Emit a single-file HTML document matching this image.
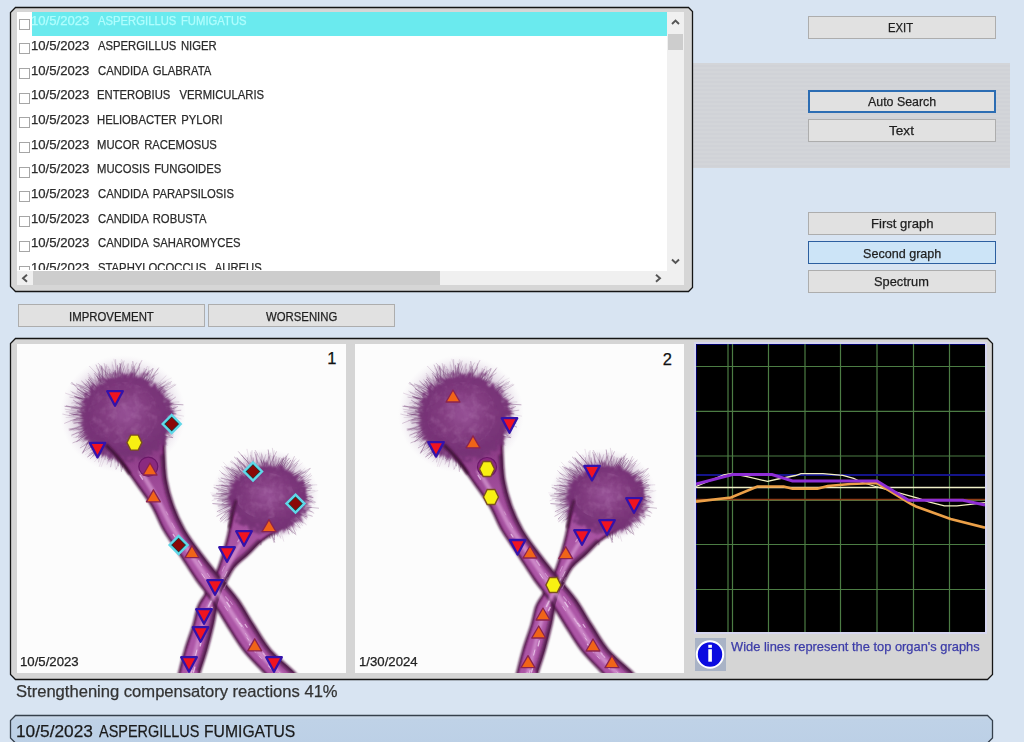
<!DOCTYPE html><html><head><meta charset="utf-8"><style>
*{margin:0;padding:0;box-sizing:border-box}
html,body{width:1024px;height:742px;overflow:hidden;background:#d8e4f2;font-family:"Liberation Sans",sans-serif;color:#222}
.a{position:absolute}
.t{position:absolute;white-space:pre;-webkit-text-stroke:0.25px currentColor}
.btn{position:absolute;left:808px;width:187.5px;height:23px;background:#e1e1e1;border:1px solid #adadad}
.cb{position:absolute;left:19px;width:11px;height:11px;border:1px solid #a6a6a6;background:#fff}
</style></head><body>
<svg width="0" height="0" style="position:absolute"><defs><radialGradient id="hg" cx="0.5" cy="0.45" r="0.55"><stop offset="0" stop-color="#985498"/><stop offset="0.45" stop-color="#823c80"/><stop offset="0.8" stop-color="#763276"/><stop offset="1" stop-color="#763276" stop-opacity="0.85"/></radialGradient><radialGradient id="fz" cx="0.5" cy="0.5" r="0.5"><stop offset="0.5" stop-color="#7e3a7c" stop-opacity="0.75"/><stop offset="0.75" stop-color="#906498" stop-opacity="0.3"/><stop offset="1" stop-color="#d8c8e0" stop-opacity="0"/></radialGradient><filter id="mott" x="0" y="0" width="100%" height="100%"><feTurbulence type="fractalNoise" baseFrequency="0.12" numOctaves="3" seed="7" result="n"/><feColorMatrix in="n" type="matrix" values="0 0 0 0 0.85  0 0 0 0 0.6  0 0 0 0 0.85  0 0 0 1.4 -0.62" result="m"/><feComposite in="m" in2="SourceGraphic" operator="in"/></filter><filter id="fray" x="-30%" y="-30%" width="160%" height="160%"><feTurbulence type="turbulence" baseFrequency="0.18" numOctaves="2" seed="5" result="t"/><feDisplacementMap in="SourceGraphic" in2="t" scale="14" xChannelSelector="R" yChannelSelector="G" result="d"/><feGaussianBlur in="d" stdDeviation="0.9"/></filter><filter id="bl1" x="-20%" y="-20%" width="140%" height="140%"><feGaussianBlur stdDeviation="1.1"/></filter><filter id="bl05" x="-5%" y="-5%" width="110%" height="110%"><feGaussianBlur stdDeviation="0.55"/></filter><symbol id="fung" viewBox="0 0 329 329"><ellipse cx="106" cy="70" rx="63" ry="59" fill="url(#fz)"/><ellipse cx="248" cy="151.5" rx="54" ry="47" fill="url(#fz)"/><g stroke="#6e3a70" stroke-linecap="round" filter="url(#bl05)"><line x1="68.3" y1="80.9" x2="52.2" y2="86.4" stroke-opacity="0.33" stroke-width="0.8"/><line x1="121.5" y1="103.2" x2="123.4" y2="116.3" stroke-opacity="0.18" stroke-width="0.6"/><line x1="141.9" y1="91.4" x2="155.7" y2="93.6" stroke-opacity="0.49" stroke-width="1.0"/><line x1="83.2" y1="39.1" x2="77.1" y2="35.6" stroke-opacity="0.33" stroke-width="0.4"/><line x1="119.0" y1="100.8" x2="121.1" y2="105.7" stroke-opacity="0.30" stroke-width="0.9"/><line x1="65.8" y1="65.5" x2="54.7" y2="62.4" stroke-opacity="0.31" stroke-width="0.6"/><line x1="150.9" y1="69.4" x2="166.6" y2="72.1" stroke-opacity="0.26" stroke-width="0.5"/><line x1="97.9" y1="100.1" x2="95.6" y2="114.9" stroke-opacity="0.45" stroke-width="0.6"/><line x1="147.6" y1="59.5" x2="151.9" y2="57.0" stroke-opacity="0.47" stroke-width="0.7"/><line x1="143.1" y1="65.7" x2="149.1" y2="65.7" stroke-opacity="0.42" stroke-width="0.6"/><line x1="137.2" y1="87.8" x2="149.7" y2="100.1" stroke-opacity="0.19" stroke-width="0.5"/><line x1="132.7" y1="88.4" x2="147.2" y2="93.5" stroke-opacity="0.35" stroke-width="0.7"/><line x1="121.2" y1="106.2" x2="122.8" y2="112.7" stroke-opacity="0.19" stroke-width="0.7"/><line x1="114.3" y1="102.5" x2="113.6" y2="120.1" stroke-opacity="0.26" stroke-width="0.9"/><line x1="115.1" y1="103.8" x2="117.0" y2="119.8" stroke-opacity="0.19" stroke-width="1.0"/><line x1="114.2" y1="102.4" x2="119.8" y2="116.3" stroke-opacity="0.25" stroke-width="0.4"/><line x1="139.5" y1="89.9" x2="146.0" y2="94.9" stroke-opacity="0.28" stroke-width="0.7"/><line x1="143.2" y1="60.9" x2="155.7" y2="61.8" stroke-opacity="0.21" stroke-width="0.5"/><line x1="141.8" y1="48.3" x2="147.2" y2="42.1" stroke-opacity="0.41" stroke-width="1.0"/><line x1="120.6" y1="109.1" x2="124.6" y2="125.1" stroke-opacity="0.30" stroke-width="0.5"/><line x1="149.2" y1="80.0" x2="156.6" y2="83.4" stroke-opacity="0.24" stroke-width="0.9"/><line x1="76.3" y1="50.8" x2="71.3" y2="45.6" stroke-opacity="0.17" stroke-width="0.5"/><line x1="65.8" y1="55.3" x2="53.0" y2="53.1" stroke-opacity="0.47" stroke-width="0.5"/><line x1="141.6" y1="73.5" x2="151.9" y2="70.4" stroke-opacity="0.21" stroke-width="0.6"/><line x1="75.4" y1="56.1" x2="68.7" y2="49.1" stroke-opacity="0.49" stroke-width="0.8"/><line x1="91.6" y1="35.4" x2="86.8" y2="30.6" stroke-opacity="0.16" stroke-width="0.9"/><line x1="92.5" y1="30.4" x2="91.5" y2="25.2" stroke-opacity="0.32" stroke-width="0.8"/><line x1="87.1" y1="108.1" x2="84.4" y2="113.4" stroke-opacity="0.41" stroke-width="0.9"/><line x1="102.7" y1="31.6" x2="107.1" y2="16.9" stroke-opacity="0.27" stroke-width="0.8"/><line x1="141.2" y1="46.4" x2="151.0" y2="42.7" stroke-opacity="0.45" stroke-width="0.7"/><line x1="79.7" y1="45.4" x2="71.7" y2="35.7" stroke-opacity="0.18" stroke-width="0.8"/><line x1="149.4" y1="68.3" x2="163.8" y2="66.2" stroke-opacity="0.41" stroke-width="0.7"/><line x1="66.0" y1="84.6" x2="60.0" y2="85.5" stroke-opacity="0.16" stroke-width="0.8"/><line x1="71.0" y1="73.9" x2="57.0" y2="75.6" stroke-opacity="0.37" stroke-width="1.0"/><line x1="104.8" y1="100.4" x2="103.1" y2="109.1" stroke-opacity="0.22" stroke-width="0.5"/><line x1="139.8" y1="48.8" x2="150.2" y2="46.2" stroke-opacity="0.26" stroke-width="0.8"/><line x1="118.0" y1="103.5" x2="117.3" y2="118.9" stroke-opacity="0.46" stroke-width="0.6"/><line x1="74.5" y1="53.1" x2="68.6" y2="49.7" stroke-opacity="0.44" stroke-width="0.9"/><line x1="95.3" y1="29.8" x2="90.9" y2="22.4" stroke-opacity="0.31" stroke-width="0.6"/><line x1="114.4" y1="104.2" x2="117.4" y2="117.0" stroke-opacity="0.26" stroke-width="0.9"/><line x1="143.9" y1="66.0" x2="149.0" y2="63.0" stroke-opacity="0.46" stroke-width="0.4"/><line x1="95.8" y1="34.3" x2="95.8" y2="25.3" stroke-opacity="0.16" stroke-width="0.5"/><line x1="74.6" y1="78.5" x2="60.9" y2="86.4" stroke-opacity="0.20" stroke-width="0.4"/><line x1="79.8" y1="44.3" x2="72.2" y2="33.5" stroke-opacity="0.43" stroke-width="1.0"/><line x1="92.0" y1="40.1" x2="84.8" y2="31.6" stroke-opacity="0.15" stroke-width="0.7"/><line x1="98.3" y1="38.5" x2="95.2" y2="30.5" stroke-opacity="0.39" stroke-width="0.7"/><line x1="74.5" y1="44.2" x2="68.8" y2="35.8" stroke-opacity="0.47" stroke-width="0.5"/><line x1="143.8" y1="54.1" x2="149.8" y2="51.1" stroke-opacity="0.37" stroke-width="0.9"/><line x1="77.7" y1="95.8" x2="63.3" y2="103.8" stroke-opacity="0.48" stroke-width="0.7"/><line x1="85.7" y1="43.4" x2="81.0" y2="29.8" stroke-opacity="0.37" stroke-width="0.8"/><line x1="116.0" y1="109.7" x2="112.5" y2="127.1" stroke-opacity="0.34" stroke-width="0.9"/><line x1="87.2" y1="107.0" x2="82.4" y2="122.4" stroke-opacity="0.18" stroke-width="0.7"/><line x1="66.0" y1="57.8" x2="54.7" y2="59.0" stroke-opacity="0.43" stroke-width="0.4"/><line x1="116.7" y1="39.3" x2="121.7" y2="31.4" stroke-opacity="0.20" stroke-width="0.5"/><line x1="64.7" y1="66.0" x2="49.4" y2="61.7" stroke-opacity="0.48" stroke-width="0.7"/><line x1="137.8" y1="60.2" x2="145.3" y2="57.9" stroke-opacity="0.25" stroke-width="0.8"/><line x1="80.9" y1="42.1" x2="71.3" y2="29.4" stroke-opacity="0.26" stroke-width="0.6"/><line x1="130.6" y1="36.3" x2="136.8" y2="31.6" stroke-opacity="0.49" stroke-width="0.7"/><line x1="74.7" y1="55.6" x2="64.0" y2="50.2" stroke-opacity="0.36" stroke-width="0.4"/><line x1="144.2" y1="63.1" x2="154.4" y2="63.9" stroke-opacity="0.35" stroke-width="0.7"/><line x1="94.0" y1="41.1" x2="88.8" y2="30.3" stroke-opacity="0.48" stroke-width="1.0"/><line x1="101.4" y1="105.5" x2="101.0" y2="112.2" stroke-opacity="0.44" stroke-width="0.9"/><line x1="70.0" y1="75.0" x2="62.5" y2="75.3" stroke-opacity="0.47" stroke-width="0.5"/><line x1="112.0" y1="40.0" x2="111.5" y2="32.5" stroke-opacity="0.39" stroke-width="0.6"/><line x1="81.3" y1="99.6" x2="76.4" y2="103.7" stroke-opacity="0.19" stroke-width="0.7"/><line x1="105.9" y1="102.6" x2="106.5" y2="114.4" stroke-opacity="0.28" stroke-width="0.6"/><line x1="72.2" y1="64.1" x2="64.9" y2="61.8" stroke-opacity="0.37" stroke-width="0.7"/><line x1="129.8" y1="39.9" x2="136.0" y2="25.0" stroke-opacity="0.41" stroke-width="0.9"/><line x1="135.8" y1="50.5" x2="144.6" y2="48.4" stroke-opacity="0.23" stroke-width="1.0"/><line x1="131.9" y1="49.3" x2="139.0" y2="45.4" stroke-opacity="0.24" stroke-width="0.5"/><line x1="124.6" y1="39.4" x2="127.3" y2="24.4" stroke-opacity="0.29" stroke-width="0.8"/><line x1="140.7" y1="73.6" x2="153.0" y2="80.1" stroke-opacity="0.49" stroke-width="0.5"/><line x1="64.1" y1="68.6" x2="52.8" y2="66.3" stroke-opacity="0.22" stroke-width="0.4"/><line x1="131.8" y1="89.0" x2="141.3" y2="96.6" stroke-opacity="0.35" stroke-width="0.5"/><line x1="120.0" y1="99.9" x2="119.5" y2="115.8" stroke-opacity="0.47" stroke-width="0.5"/><line x1="147.1" y1="85.7" x2="156.0" y2="92.2" stroke-opacity="0.26" stroke-width="0.7"/><line x1="68.4" y1="66.6" x2="56.3" y2="70.9" stroke-opacity="0.40" stroke-width="0.9"/><line x1="122.0" y1="102.3" x2="129.2" y2="115.0" stroke-opacity="0.22" stroke-width="0.5"/><line x1="73.5" y1="67.6" x2="57.9" y2="61.9" stroke-opacity="0.40" stroke-width="0.9"/><line x1="80.2" y1="44.6" x2="71.5" y2="35.3" stroke-opacity="0.49" stroke-width="0.9"/><line x1="103.7" y1="110.9" x2="99.4" y2="124.9" stroke-opacity="0.44" stroke-width="0.6"/><line x1="140.6" y1="45.4" x2="153.5" y2="39.8" stroke-opacity="0.42" stroke-width="0.6"/><line x1="100.3" y1="39.4" x2="98.4" y2="30.1" stroke-opacity="0.15" stroke-width="0.6"/><line x1="80.1" y1="41.2" x2="77.7" y2="33.6" stroke-opacity="0.38" stroke-width="0.6"/><line x1="84.7" y1="38.8" x2="77.4" y2="29.5" stroke-opacity="0.50" stroke-width="0.8"/><line x1="93.3" y1="32.6" x2="81.4" y2="19.5" stroke-opacity="0.37" stroke-width="0.8"/><line x1="104.4" y1="104.9" x2="105.7" y2="110.4" stroke-opacity="0.28" stroke-width="0.5"/><line x1="105.8" y1="110.9" x2="105.6" y2="123.0" stroke-opacity="0.49" stroke-width="0.7"/><line x1="146.4" y1="68.8" x2="160.6" y2="62.6" stroke-opacity="0.36" stroke-width="0.9"/><line x1="148.4" y1="81.5" x2="155.2" y2="83.3" stroke-opacity="0.21" stroke-width="0.7"/><line x1="80.6" y1="50.1" x2="66.6" y2="40.0" stroke-opacity="0.33" stroke-width="0.8"/><line x1="82.1" y1="95.1" x2="72.6" y2="104.7" stroke-opacity="0.25" stroke-width="0.8"/><line x1="96.7" y1="99.1" x2="97.7" y2="107.3" stroke-opacity="0.20" stroke-width="0.9"/><line x1="72.3" y1="96.0" x2="65.6" y2="109.1" stroke-opacity="0.50" stroke-width="1.0"/><line x1="145.2" y1="88.2" x2="154.8" y2="92.7" stroke-opacity="0.49" stroke-width="0.5"/><line x1="62.3" y1="64.0" x2="48.0" y2="62.3" stroke-opacity="0.49" stroke-width="0.9"/><line x1="79.1" y1="50.9" x2="68.3" y2="43.3" stroke-opacity="0.22" stroke-width="0.4"/><line x1="72.6" y1="64.4" x2="62.4" y2="61.0" stroke-opacity="0.31" stroke-width="0.6"/><line x1="73.2" y1="52.6" x2="60.3" y2="44.8" stroke-opacity="0.50" stroke-width="1.0"/><line x1="102.5" y1="37.1" x2="104.1" y2="30.8" stroke-opacity="0.42" stroke-width="0.8"/><line x1="83.3" y1="95.9" x2="73.9" y2="106.1" stroke-opacity="0.36" stroke-width="0.8"/><line x1="106.7" y1="37.5" x2="110.3" y2="30.1" stroke-opacity="0.47" stroke-width="0.9"/><line x1="138.1" y1="77.6" x2="146.5" y2="79.1" stroke-opacity="0.37" stroke-width="0.5"/><line x1="73.8" y1="62.0" x2="68.2" y2="59.5" stroke-opacity="0.34" stroke-width="0.8"/><line x1="79.1" y1="95.7" x2="74.6" y2="101.9" stroke-opacity="0.41" stroke-width="0.9"/><line x1="136.3" y1="84.3" x2="149.3" y2="92.7" stroke-opacity="0.42" stroke-width="0.5"/><line x1="74.3" y1="85.2" x2="61.4" y2="93.9" stroke-opacity="0.38" stroke-width="1.0"/><line x1="88.1" y1="102.7" x2="77.0" y2="112.3" stroke-opacity="0.30" stroke-width="0.6"/><line x1="141.6" y1="93.2" x2="147.5" y2="94.6" stroke-opacity="0.35" stroke-width="0.7"/><line x1="91.7" y1="39.0" x2="81.0" y2="28.4" stroke-opacity="0.22" stroke-width="0.8"/><line x1="137.6" y1="86.6" x2="148.7" y2="95.8" stroke-opacity="0.25" stroke-width="0.5"/><line x1="80.0" y1="100.2" x2="76.8" y2="109.4" stroke-opacity="0.40" stroke-width="0.7"/><line x1="144.6" y1="49.8" x2="158.8" y2="40.7" stroke-opacity="0.43" stroke-width="0.6"/><line x1="90.6" y1="101.8" x2="78.5" y2="114.0" stroke-opacity="0.24" stroke-width="0.6"/><line x1="81.4" y1="95.8" x2="75.5" y2="104.0" stroke-opacity="0.22" stroke-width="0.7"/><line x1="117.4" y1="35.0" x2="122.9" y2="20.1" stroke-opacity="0.21" stroke-width="0.9"/><line x1="132.3" y1="47.2" x2="136.3" y2="43.6" stroke-opacity="0.34" stroke-width="0.7"/><line x1="145.7" y1="62.1" x2="158.4" y2="53.3" stroke-opacity="0.34" stroke-width="0.9"/><line x1="134.9" y1="85.7" x2="144.1" y2="97.0" stroke-opacity="0.18" stroke-width="0.8"/><line x1="131.8" y1="100.7" x2="142.3" y2="109.1" stroke-opacity="0.23" stroke-width="0.9"/><line x1="64.3" y1="64.7" x2="54.2" y2="64.8" stroke-opacity="0.49" stroke-width="0.8"/><line x1="66.9" y1="71.5" x2="52.6" y2="69.3" stroke-opacity="0.47" stroke-width="0.6"/><line x1="124.8" y1="36.2" x2="135.8" y2="24.5" stroke-opacity="0.44" stroke-width="0.9"/><line x1="145.1" y1="60.1" x2="156.8" y2="59.2" stroke-opacity="0.43" stroke-width="0.7"/><line x1="75.9" y1="85.3" x2="61.3" y2="86.2" stroke-opacity="0.28" stroke-width="0.5"/><line x1="116.7" y1="103.8" x2="115.5" y2="112.5" stroke-opacity="0.17" stroke-width="0.6"/><line x1="136.5" y1="95.0" x2="150.2" y2="101.3" stroke-opacity="0.17" stroke-width="0.7"/><line x1="68.1" y1="49.4" x2="62.7" y2="48.4" stroke-opacity="0.21" stroke-width="0.5"/><line x1="109.8" y1="108.5" x2="114.0" y2="120.5" stroke-opacity="0.21" stroke-width="0.6"/><line x1="125.6" y1="104.6" x2="129.5" y2="112.8" stroke-opacity="0.44" stroke-width="0.7"/><line x1="103.1" y1="110.6" x2="104.4" y2="127.4" stroke-opacity="0.34" stroke-width="1.0"/><line x1="71.0" y1="73.6" x2="65.6" y2="71.9" stroke-opacity="0.43" stroke-width="0.6"/><line x1="67.7" y1="63.7" x2="60.7" y2="58.8" stroke-opacity="0.38" stroke-width="0.5"/><line x1="144.3" y1="72.4" x2="153.5" y2="75.7" stroke-opacity="0.40" stroke-width="0.8"/><line x1="124.9" y1="96.8" x2="131.5" y2="103.2" stroke-opacity="0.45" stroke-width="0.7"/><line x1="76.7" y1="38.2" x2="71.4" y2="31.6" stroke-opacity="0.20" stroke-width="0.9"/><line x1="148.7" y1="70.3" x2="164.0" y2="75.0" stroke-opacity="0.18" stroke-width="0.6"/><line x1="99.0" y1="39.3" x2="96.3" y2="28.4" stroke-opacity="0.48" stroke-width="0.8"/><line x1="128.6" y1="43.6" x2="137.2" y2="31.0" stroke-opacity="0.47" stroke-width="0.5"/><line x1="122.2" y1="41.0" x2="128.0" y2="30.4" stroke-opacity="0.21" stroke-width="0.9"/><line x1="92.3" y1="101.4" x2="91.1" y2="107.3" stroke-opacity="0.31" stroke-width="0.8"/><line x1="79.9" y1="99.6" x2="76.3" y2="104.9" stroke-opacity="0.31" stroke-width="1.0"/><line x1="125.5" y1="36.7" x2="127.5" y2="32.0" stroke-opacity="0.40" stroke-width="0.5"/><line x1="70.9" y1="56.0" x2="67.5" y2="52.2" stroke-opacity="0.43" stroke-width="0.5"/><line x1="79.1" y1="47.6" x2="72.0" y2="40.7" stroke-opacity="0.25" stroke-width="0.6"/><line x1="74.2" y1="93.9" x2="69.3" y2="100.6" stroke-opacity="0.41" stroke-width="0.6"/><line x1="143.2" y1="57.5" x2="155.8" y2="50.7" stroke-opacity="0.44" stroke-width="0.5"/><line x1="127.3" y1="94.3" x2="133.9" y2="106.4" stroke-opacity="0.21" stroke-width="0.6"/><line x1="126.7" y1="38.2" x2="128.5" y2="32.3" stroke-opacity="0.20" stroke-width="0.5"/><line x1="78.2" y1="87.2" x2="64.7" y2="97.5" stroke-opacity="0.33" stroke-width="0.8"/><line x1="110.5" y1="30.3" x2="110.1" y2="20.3" stroke-opacity="0.29" stroke-width="0.4"/><line x1="72.5" y1="92.5" x2="55.9" y2="98.8" stroke-opacity="0.38" stroke-width="0.8"/><line x1="142.3" y1="74.0" x2="151.5" y2="76.3" stroke-opacity="0.19" stroke-width="0.6"/><line x1="63.7" y1="67.7" x2="48.2" y2="65.2" stroke-opacity="0.21" stroke-width="0.9"/><line x1="138.2" y1="49.0" x2="146.1" y2="43.5" stroke-opacity="0.20" stroke-width="0.8"/><line x1="144.8" y1="67.0" x2="158.7" y2="70.1" stroke-opacity="0.22" stroke-width="1.0"/><line x1="81.7" y1="46.7" x2="76.5" y2="43.4" stroke-opacity="0.35" stroke-width="0.8"/><line x1="84.9" y1="106.2" x2="80.6" y2="114.8" stroke-opacity="0.19" stroke-width="1.0"/><line x1="134.8" y1="100.8" x2="142.3" y2="110.3" stroke-opacity="0.35" stroke-width="0.6"/><line x1="143.8" y1="47.4" x2="157.7" y2="40.2" stroke-opacity="0.19" stroke-width="0.9"/><line x1="95.5" y1="109.6" x2="93.0" y2="117.3" stroke-opacity="0.44" stroke-width="0.5"/><line x1="74.1" y1="60.8" x2="68.7" y2="60.7" stroke-opacity="0.50" stroke-width="1.0"/><line x1="86.3" y1="41.6" x2="81.4" y2="28.8" stroke-opacity="0.28" stroke-width="0.8"/><line x1="116.8" y1="41.3" x2="119.1" y2="34.1" stroke-opacity="0.20" stroke-width="0.6"/><line x1="74.7" y1="56.3" x2="63.2" y2="53.7" stroke-opacity="0.35" stroke-width="0.6"/><line x1="85.3" y1="46.1" x2="73.8" y2="38.7" stroke-opacity="0.49" stroke-width="0.8"/><line x1="69.1" y1="76.6" x2="56.0" y2="76.8" stroke-opacity="0.42" stroke-width="0.9"/><line x1="61.2" y1="73.7" x2="45.8" y2="70.1" stroke-opacity="0.29" stroke-width="0.7"/><line x1="65.9" y1="53.5" x2="55.2" y2="48.5" stroke-opacity="0.30" stroke-width="0.9"/><line x1="91.8" y1="97.9" x2="81.4" y2="107.9" stroke-opacity="0.41" stroke-width="0.8"/><line x1="106.4" y1="36.2" x2="101.8" y2="24.3" stroke-opacity="0.19" stroke-width="0.7"/><line x1="68.6" y1="69.4" x2="63.0" y2="68.3" stroke-opacity="0.33" stroke-width="0.5"/><line x1="93.1" y1="102.7" x2="93.3" y2="110.8" stroke-opacity="0.47" stroke-width="1.0"/><line x1="84.1" y1="35.1" x2="81.5" y2="25.0" stroke-opacity="0.23" stroke-width="0.8"/><line x1="66.0" y1="53.3" x2="61.1" y2="49.4" stroke-opacity="0.19" stroke-width="0.7"/><line x1="136.9" y1="60.8" x2="144.1" y2="57.0" stroke-opacity="0.26" stroke-width="0.4"/><line x1="139.7" y1="45.6" x2="146.9" y2="38.4" stroke-opacity="0.35" stroke-width="0.4"/><line x1="148.9" y1="77.9" x2="157.7" y2="79.7" stroke-opacity="0.48" stroke-width="1.0"/><line x1="71.5" y1="75.6" x2="62.9" y2="73.8" stroke-opacity="0.46" stroke-width="0.5"/><line x1="125.3" y1="40.7" x2="128.2" y2="29.9" stroke-opacity="0.46" stroke-width="1.0"/><line x1="118.0" y1="106.0" x2="117.7" y2="113.5" stroke-opacity="0.17" stroke-width="0.5"/><line x1="100.5" y1="36.5" x2="103.5" y2="20.0" stroke-opacity="0.40" stroke-width="0.5"/><line x1="91.3" y1="31.1" x2="84.2" y2="23.0" stroke-opacity="0.23" stroke-width="0.6"/><line x1="97.4" y1="38.4" x2="94.0" y2="31.9" stroke-opacity="0.38" stroke-width="0.9"/><line x1="77.6" y1="97.3" x2="65.2" y2="108.2" stroke-opacity="0.23" stroke-width="0.6"/><line x1="142.6" y1="53.1" x2="150.7" y2="50.3" stroke-opacity="0.18" stroke-width="1.0"/><line x1="69.7" y1="83.3" x2="61.2" y2="91.7" stroke-opacity="0.36" stroke-width="0.6"/><line x1="105.8" y1="109.7" x2="106.9" y2="115.7" stroke-opacity="0.41" stroke-width="0.5"/><line x1="98.9" y1="106.1" x2="95.0" y2="112.4" stroke-opacity="0.50" stroke-width="0.4"/><line x1="65.4" y1="79.3" x2="55.5" y2="77.9" stroke-opacity="0.32" stroke-width="0.5"/><line x1="68.0" y1="57.0" x2="59.4" y2="52.4" stroke-opacity="0.42" stroke-width="0.7"/><line x1="63.0" y1="68.6" x2="49.1" y2="67.8" stroke-opacity="0.48" stroke-width="0.5"/><line x1="112.4" y1="38.4" x2="111.7" y2="25.5" stroke-opacity="0.30" stroke-width="0.9"/><line x1="115.6" y1="31.5" x2="117.4" y2="23.6" stroke-opacity="0.23" stroke-width="0.7"/><line x1="73.2" y1="70.2" x2="60.6" y2="67.8" stroke-opacity="0.35" stroke-width="0.9"/><line x1="120.6" y1="99.0" x2="122.8" y2="103.7" stroke-opacity="0.30" stroke-width="0.7"/><line x1="102.6" y1="109.5" x2="100.0" y2="114.9" stroke-opacity="0.35" stroke-width="0.7"/><line x1="115.1" y1="38.1" x2="115.8" y2="31.2" stroke-opacity="0.16" stroke-width="0.6"/><line x1="77.8" y1="44.9" x2="72.1" y2="38.6" stroke-opacity="0.18" stroke-width="0.9"/><line x1="122.8" y1="99.3" x2="125.1" y2="106.0" stroke-opacity="0.44" stroke-width="0.9"/><line x1="140.8" y1="83.1" x2="150.5" y2="84.4" stroke-opacity="0.49" stroke-width="0.4"/><line x1="64.1" y1="72.6" x2="47.6" y2="79.3" stroke-opacity="0.31" stroke-width="0.8"/><line x1="140.4" y1="78.1" x2="156.9" y2="76.8" stroke-opacity="0.29" stroke-width="0.6"/><line x1="76.3" y1="84.2" x2="70.9" y2="84.4" stroke-opacity="0.42" stroke-width="0.8"/><line x1="110.5" y1="103.0" x2="114.8" y2="114.4" stroke-opacity="0.31" stroke-width="1.0"/><line x1="81.9" y1="95.8" x2="69.0" y2="108.0" stroke-opacity="0.16" stroke-width="0.6"/><line x1="86.5" y1="45.0" x2="82.3" y2="36.5" stroke-opacity="0.45" stroke-width="0.8"/><line x1="134.9" y1="46.6" x2="144.2" y2="42.7" stroke-opacity="0.28" stroke-width="0.9"/><line x1="113.9" y1="103.5" x2="115.2" y2="110.8" stroke-opacity="0.21" stroke-width="0.5"/><line x1="114.5" y1="104.9" x2="116.9" y2="113.5" stroke-opacity="0.50" stroke-width="0.8"/><line x1="128.8" y1="45.2" x2="131.9" y2="35.7" stroke-opacity="0.39" stroke-width="0.6"/><line x1="101.0" y1="100.1" x2="101.4" y2="107.5" stroke-opacity="0.29" stroke-width="1.0"/><line x1="98.2" y1="37.4" x2="93.3" y2="29.0" stroke-opacity="0.48" stroke-width="0.6"/><line x1="110.1" y1="31.4" x2="104.6" y2="15.6" stroke-opacity="0.26" stroke-width="0.6"/><line x1="143.7" y1="90.3" x2="150.4" y2="96.7" stroke-opacity="0.33" stroke-width="0.4"/><line x1="78.2" y1="90.4" x2="75.1" y2="95.0" stroke-opacity="0.36" stroke-width="0.4"/><line x1="91.6" y1="102.6" x2="90.8" y2="114.6" stroke-opacity="0.40" stroke-width="0.6"/><line x1="99.7" y1="32.4" x2="96.9" y2="26.1" stroke-opacity="0.25" stroke-width="0.8"/><line x1="75.1" y1="89.5" x2="64.3" y2="101.6" stroke-opacity="0.25" stroke-width="0.6"/><line x1="113.0" y1="100.0" x2="113.5" y2="105.3" stroke-opacity="0.35" stroke-width="0.9"/><line x1="141.7" y1="64.8" x2="155.1" y2="67.9" stroke-opacity="0.23" stroke-width="0.8"/><line x1="83.8" y1="34.1" x2="72.5" y2="22.3" stroke-opacity="0.37" stroke-width="0.5"/><line x1="72.4" y1="85.3" x2="67.5" y2="88.4" stroke-opacity="0.26" stroke-width="0.7"/><line x1="99.6" y1="101.5" x2="97.9" y2="111.6" stroke-opacity="0.21" stroke-width="0.8"/><line x1="108.1" y1="101.3" x2="109.4" y2="110.6" stroke-opacity="0.20" stroke-width="0.7"/><line x1="94.2" y1="35.0" x2="84.7" y2="24.5" stroke-opacity="0.29" stroke-width="0.6"/><line x1="140.6" y1="83.5" x2="145.9" y2="85.7" stroke-opacity="0.36" stroke-width="0.7"/><line x1="89.7" y1="99.5" x2="88.0" y2="104.6" stroke-opacity="0.46" stroke-width="0.7"/><line x1="103.0" y1="108.0" x2="102.6" y2="115.4" stroke-opacity="0.37" stroke-width="1.0"/><line x1="80.2" y1="98.1" x2="66.2" y2="108.1" stroke-opacity="0.37" stroke-width="0.8"/><line x1="74.1" y1="88.6" x2="65.8" y2="90.9" stroke-opacity="0.46" stroke-width="0.6"/><line x1="133.7" y1="53.5" x2="139.4" y2="49.9" stroke-opacity="0.26" stroke-width="0.6"/><line x1="139.9" y1="65.4" x2="146.9" y2="62.5" stroke-opacity="0.39" stroke-width="0.5"/><line x1="145.3" y1="70.2" x2="155.1" y2="67.9" stroke-opacity="0.32" stroke-width="0.8"/><line x1="67.6" y1="58.8" x2="57.4" y2="51.9" stroke-opacity="0.49" stroke-width="0.6"/><line x1="81.1" y1="103.4" x2="74.6" y2="109.7" stroke-opacity="0.39" stroke-width="0.8"/><line x1="147.7" y1="61.0" x2="154.7" y2="60.2" stroke-opacity="0.32" stroke-width="0.7"/><line x1="81.4" y1="94.6" x2="71.1" y2="105.0" stroke-opacity="0.23" stroke-width="0.5"/><line x1="90.3" y1="98.8" x2="88.7" y2="110.4" stroke-opacity="0.17" stroke-width="0.4"/><line x1="139.1" y1="93.1" x2="144.4" y2="96.7" stroke-opacity="0.42" stroke-width="0.7"/><line x1="128.6" y1="104.5" x2="141.9" y2="113.9" stroke-opacity="0.24" stroke-width="0.7"/><line x1="116.7" y1="36.6" x2="117.7" y2="22.3" stroke-opacity="0.40" stroke-width="0.6"/><line x1="84.9" y1="103.9" x2="73.2" y2="114.7" stroke-opacity="0.35" stroke-width="0.7"/><line x1="95.2" y1="33.8" x2="95.2" y2="18.0" stroke-opacity="0.19" stroke-width="0.6"/><line x1="88.9" y1="41.2" x2="82.9" y2="36.8" stroke-opacity="0.35" stroke-width="1.0"/><line x1="139.5" y1="64.1" x2="153.0" y2="60.6" stroke-opacity="0.37" stroke-width="0.6"/><line x1="147.0" y1="53.0" x2="152.5" y2="51.7" stroke-opacity="0.19" stroke-width="0.4"/><line x1="96.7" y1="107.8" x2="98.7" y2="125.6" stroke-opacity="0.27" stroke-width="0.4"/><line x1="68.9" y1="60.5" x2="59.1" y2="59.6" stroke-opacity="0.43" stroke-width="0.9"/><line x1="98.1" y1="104.1" x2="92.5" y2="115.8" stroke-opacity="0.49" stroke-width="0.6"/><line x1="92.5" y1="35.6" x2="82.9" y2="23.5" stroke-opacity="0.21" stroke-width="0.5"/><line x1="138.5" y1="56.5" x2="146.7" y2="48.7" stroke-opacity="0.26" stroke-width="0.4"/><line x1="74.7" y1="57.2" x2="61.8" y2="54.4" stroke-opacity="0.23" stroke-width="0.7"/><line x1="82.3" y1="94.9" x2="80.4" y2="100.2" stroke-opacity="0.46" stroke-width="0.6"/><line x1="136.6" y1="85.3" x2="143.2" y2="94.4" stroke-opacity="0.22" stroke-width="0.9"/><line x1="68.6" y1="73.5" x2="53.4" y2="76.4" stroke-opacity="0.17" stroke-width="0.7"/><line x1="83.8" y1="38.7" x2="82.1" y2="30.2" stroke-opacity="0.45" stroke-width="1.0"/><line x1="65.8" y1="84.0" x2="54.3" y2="92.7" stroke-opacity="0.16" stroke-width="0.5"/><line x1="130.5" y1="91.1" x2="135.9" y2="99.1" stroke-opacity="0.26" stroke-width="0.7"/><line x1="141.0" y1="72.2" x2="157.2" y2="65.8" stroke-opacity="0.33" stroke-width="0.9"/><line x1="116.9" y1="32.5" x2="122.2" y2="23.7" stroke-opacity="0.44" stroke-width="0.9"/><line x1="139.5" y1="67.2" x2="156.6" y2="64.2" stroke-opacity="0.40" stroke-width="0.6"/><line x1="133.6" y1="53.6" x2="142.2" y2="44.5" stroke-opacity="0.29" stroke-width="0.6"/><line x1="82.5" y1="36.8" x2="78.2" y2="28.1" stroke-opacity="0.27" stroke-width="0.6"/><line x1="136.2" y1="50.9" x2="140.7" y2="46.7" stroke-opacity="0.41" stroke-width="0.5"/><line x1="104.3" y1="33.4" x2="99.8" y2="20.3" stroke-opacity="0.19" stroke-width="0.5"/><line x1="83.7" y1="98.5" x2="80.7" y2="102.6" stroke-opacity="0.29" stroke-width="0.6"/><line x1="62.8" y1="60.4" x2="56.4" y2="56.2" stroke-opacity="0.26" stroke-width="0.9"/><line x1="140.8" y1="96.3" x2="145.7" y2="105.8" stroke-opacity="0.23" stroke-width="0.6"/><line x1="96.6" y1="38.9" x2="95.6" y2="30.4" stroke-opacity="0.48" stroke-width="0.6"/><line x1="121.0" y1="101.5" x2="133.0" y2="114.7" stroke-opacity="0.37" stroke-width="0.6"/><line x1="84.3" y1="44.3" x2="80.2" y2="31.9" stroke-opacity="0.45" stroke-width="0.8"/><line x1="66.5" y1="68.9" x2="60.3" y2="66.7" stroke-opacity="0.39" stroke-width="0.7"/><line x1="86.9" y1="39.7" x2="79.9" y2="32.5" stroke-opacity="0.36" stroke-width="0.7"/><line x1="73.3" y1="67.1" x2="60.2" y2="66.4" stroke-opacity="0.36" stroke-width="0.8"/><line x1="137.2" y1="56.7" x2="148.3" y2="56.8" stroke-opacity="0.41" stroke-width="0.6"/><line x1="102.3" y1="28.3" x2="104.8" y2="18.4" stroke-opacity="0.19" stroke-width="1.0"/><line x1="70.7" y1="71.8" x2="54.8" y2="70.6" stroke-opacity="0.48" stroke-width="0.9"/><line x1="117.5" y1="35.4" x2="115.8" y2="17.5" stroke-opacity="0.45" stroke-width="0.8"/><line x1="105.8" y1="109.7" x2="105.4" y2="120.6" stroke-opacity="0.45" stroke-width="0.5"/><line x1="98.5" y1="107.2" x2="97.1" y2="112.9" stroke-opacity="0.43" stroke-width="0.7"/><line x1="108.2" y1="109.6" x2="105.1" y2="125.4" stroke-opacity="0.34" stroke-width="0.9"/><line x1="115.9" y1="39.3" x2="115.3" y2="29.6" stroke-opacity="0.16" stroke-width="0.6"/><line x1="134.3" y1="39.9" x2="137.1" y2="34.0" stroke-opacity="0.29" stroke-width="0.9"/><line x1="73.5" y1="42.6" x2="71.3" y2="37.1" stroke-opacity="0.22" stroke-width="0.8"/><line x1="135.7" y1="42.8" x2="141.8" y2="38.4" stroke-opacity="0.30" stroke-width="0.4"/><line x1="86.6" y1="98.7" x2="81.9" y2="111.0" stroke-opacity="0.36" stroke-width="0.8"/><line x1="120.4" y1="98.8" x2="126.6" y2="111.3" stroke-opacity="0.20" stroke-width="0.5"/><line x1="143.4" y1="56.5" x2="151.1" y2="50.7" stroke-opacity="0.50" stroke-width="0.8"/><line x1="102.8" y1="35.7" x2="101.3" y2="26.7" stroke-opacity="0.20" stroke-width="0.8"/><line x1="68.0" y1="88.2" x2="59.0" y2="93.2" stroke-opacity="0.33" stroke-width="1.0"/><line x1="82.5" y1="101.7" x2="77.5" y2="107.9" stroke-opacity="0.25" stroke-width="0.9"/><line x1="96.2" y1="109.2" x2="93.6" y2="122.8" stroke-opacity="0.48" stroke-width="0.6"/><line x1="104.3" y1="32.7" x2="99.8" y2="22.9" stroke-opacity="0.30" stroke-width="0.6"/><line x1="64.6" y1="85.0" x2="56.0" y2="86.8" stroke-opacity="0.39" stroke-width="0.5"/><line x1="77.1" y1="86.8" x2="65.2" y2="98.5" stroke-opacity="0.30" stroke-width="0.6"/><line x1="124.5" y1="33.6" x2="130.4" y2="22.4" stroke-opacity="0.18" stroke-width="0.9"/><line x1="137.4" y1="88.2" x2="144.6" y2="95.0" stroke-opacity="0.38" stroke-width="0.6"/><line x1="141.5" y1="45.2" x2="146.1" y2="42.6" stroke-opacity="0.31" stroke-width="0.6"/><line x1="70.5" y1="77.4" x2="56.9" y2="79.2" stroke-opacity="0.49" stroke-width="1.0"/><line x1="143.3" y1="68.4" x2="159.0" y2="69.8" stroke-opacity="0.40" stroke-width="1.0"/><line x1="140.9" y1="84.5" x2="149.6" y2="89.9" stroke-opacity="0.23" stroke-width="1.0"/><line x1="115.3" y1="103.5" x2="117.7" y2="109.9" stroke-opacity="0.41" stroke-width="0.5"/><line x1="126.2" y1="102.8" x2="130.2" y2="115.3" stroke-opacity="0.24" stroke-width="0.9"/><line x1="100.9" y1="30.9" x2="100.0" y2="24.4" stroke-opacity="0.16" stroke-width="0.9"/><line x1="147.1" y1="56.1" x2="151.8" y2="53.6" stroke-opacity="0.34" stroke-width="0.7"/><line x1="138.4" y1="95.4" x2="145.2" y2="101.2" stroke-opacity="0.19" stroke-width="0.7"/><line x1="129.0" y1="92.8" x2="138.4" y2="99.6" stroke-opacity="0.42" stroke-width="0.5"/><line x1="77.6" y1="85.9" x2="71.1" y2="90.2" stroke-opacity="0.35" stroke-width="0.7"/><line x1="125.9" y1="44.6" x2="131.0" y2="29.4" stroke-opacity="0.49" stroke-width="0.7"/><line x1="72.6" y1="90.8" x2="56.6" y2="93.5" stroke-opacity="0.29" stroke-width="0.4"/><line x1="130.3" y1="102.8" x2="136.1" y2="116.1" stroke-opacity="0.20" stroke-width="0.7"/><line x1="139.2" y1="75.6" x2="146.6" y2="80.6" stroke-opacity="0.38" stroke-width="0.9"/><line x1="142.1" y1="80.0" x2="148.1" y2="80.5" stroke-opacity="0.19" stroke-width="1.0"/><line x1="87.7" y1="101.7" x2="77.6" y2="110.7" stroke-opacity="0.48" stroke-width="0.7"/><line x1="62.2" y1="69.8" x2="52.2" y2="71.5" stroke-opacity="0.41" stroke-width="0.6"/><line x1="80.5" y1="96.0" x2="74.0" y2="105.2" stroke-opacity="0.30" stroke-width="0.7"/><line x1="146.9" y1="82.3" x2="152.3" y2="84.2" stroke-opacity="0.34" stroke-width="0.6"/><line x1="111.8" y1="100.9" x2="115.0" y2="110.2" stroke-opacity="0.32" stroke-width="0.5"/><line x1="105.9" y1="34.0" x2="105.4" y2="28.9" stroke-opacity="0.49" stroke-width="0.4"/><line x1="68.9" y1="47.0" x2="61.3" y2="40.9" stroke-opacity="0.28" stroke-width="0.6"/><line x1="75.2" y1="46.5" x2="68.1" y2="40.7" stroke-opacity="0.33" stroke-width="0.9"/><line x1="137.7" y1="80.3" x2="145.9" y2="81.3" stroke-opacity="0.43" stroke-width="0.7"/><line x1="129.9" y1="43.1" x2="136.5" y2="37.3" stroke-opacity="0.18" stroke-width="1.0"/><line x1="123.9" y1="40.3" x2="130.5" y2="33.9" stroke-opacity="0.43" stroke-width="0.8"/><line x1="145.4" y1="83.7" x2="150.4" y2="86.2" stroke-opacity="0.34" stroke-width="1.0"/><line x1="85.0" y1="46.7" x2="77.2" y2="31.4" stroke-opacity="0.35" stroke-width="0.4"/><line x1="102.9" y1="35.0" x2="107.7" y2="22.0" stroke-opacity="0.47" stroke-width="0.4"/><line x1="113.4" y1="35.3" x2="114.7" y2="20.6" stroke-opacity="0.31" stroke-width="0.7"/><line x1="132.9" y1="93.0" x2="146.5" y2="98.0" stroke-opacity="0.19" stroke-width="0.9"/><line x1="86.3" y1="38.3" x2="81.3" y2="34.1" stroke-opacity="0.26" stroke-width="1.0"/><line x1="65.1" y1="54.8" x2="57.7" y2="52.5" stroke-opacity="0.34" stroke-width="0.9"/><line x1="137.0" y1="98.4" x2="147.5" y2="102.2" stroke-opacity="0.30" stroke-width="0.6"/><line x1="85.8" y1="33.4" x2="82.4" y2="22.5" stroke-opacity="0.29" stroke-width="0.9"/><line x1="139.0" y1="93.9" x2="144.3" y2="98.8" stroke-opacity="0.22" stroke-width="0.6"/><line x1="125.0" y1="99.4" x2="131.3" y2="110.4" stroke-opacity="0.29" stroke-width="0.7"/><line x1="126.2" y1="41.2" x2="132.9" y2="30.5" stroke-opacity="0.49" stroke-width="0.6"/><line x1="94.5" y1="38.8" x2="93.5" y2="30.5" stroke-opacity="0.35" stroke-width="0.6"/><line x1="145.4" y1="85.7" x2="153.5" y2="91.3" stroke-opacity="0.30" stroke-width="0.8"/><line x1="64.4" y1="54.8" x2="48.5" y2="49.2" stroke-opacity="0.32" stroke-width="0.5"/><line x1="106.7" y1="38.6" x2="109.6" y2="30.1" stroke-opacity="0.16" stroke-width="0.8"/><line x1="70.2" y1="54.8" x2="60.9" y2="53.7" stroke-opacity="0.48" stroke-width="0.9"/><line x1="117.5" y1="40.5" x2="119.0" y2="25.4" stroke-opacity="0.22" stroke-width="0.7"/><line x1="79.8" y1="49.8" x2="69.1" y2="39.5" stroke-opacity="0.46" stroke-width="1.0"/><line x1="92.2" y1="38.0" x2="89.0" y2="20.9" stroke-opacity="0.25" stroke-width="0.9"/><line x1="100.8" y1="37.0" x2="96.3" y2="30.1" stroke-opacity="0.34" stroke-width="0.6"/><line x1="96.5" y1="102.0" x2="94.8" y2="108.5" stroke-opacity="0.25" stroke-width="0.6"/><line x1="99.3" y1="105.7" x2="101.5" y2="121.9" stroke-opacity="0.45" stroke-width="0.9"/><line x1="75.7" y1="46.8" x2="64.7" y2="37.2" stroke-opacity="0.38" stroke-width="1.0"/><line x1="111.6" y1="37.1" x2="114.6" y2="32.3" stroke-opacity="0.28" stroke-width="0.9"/><line x1="110.0" y1="105.4" x2="109.0" y2="115.1" stroke-opacity="0.48" stroke-width="0.7"/><line x1="72.3" y1="56.2" x2="66.9" y2="50.3" stroke-opacity="0.19" stroke-width="1.0"/><line x1="87.7" y1="44.1" x2="74.1" y2="34.2" stroke-opacity="0.35" stroke-width="0.5"/><line x1="142.2" y1="67.6" x2="156.8" y2="60.3" stroke-opacity="0.38" stroke-width="0.4"/><line x1="144.9" y1="76.8" x2="161.6" y2="83.0" stroke-opacity="0.45" stroke-width="0.9"/><line x1="72.9" y1="65.9" x2="61.2" y2="67.6" stroke-opacity="0.33" stroke-width="0.6"/><line x1="71.1" y1="70.2" x2="57.0" y2="71.3" stroke-opacity="0.32" stroke-width="0.4"/><line x1="66.7" y1="73.0" x2="49.1" y2="73.5" stroke-opacity="0.20" stroke-width="0.6"/><line x1="84.9" y1="103.1" x2="70.7" y2="112.8" stroke-opacity="0.48" stroke-width="1.0"/><line x1="133.9" y1="38.0" x2="137.2" y2="33.9" stroke-opacity="0.36" stroke-width="0.8"/><line x1="75.5" y1="45.6" x2="59.4" y2="40.0" stroke-opacity="0.33" stroke-width="1.0"/><line x1="139.1" y1="76.3" x2="152.5" y2="85.6" stroke-opacity="0.16" stroke-width="0.4"/><line x1="125.7" y1="36.4" x2="132.1" y2="26.5" stroke-opacity="0.42" stroke-width="0.9"/><line x1="139.3" y1="70.1" x2="153.2" y2="76.6" stroke-opacity="0.44" stroke-width="0.6"/><line x1="87.2" y1="99.5" x2="83.5" y2="103.2" stroke-opacity="0.24" stroke-width="0.8"/><line x1="69.9" y1="64.4" x2="56.2" y2="62.7" stroke-opacity="0.23" stroke-width="0.9"/><line x1="121.4" y1="98.6" x2="125.3" y2="105.9" stroke-opacity="0.42" stroke-width="0.6"/><line x1="109.0" y1="107.8" x2="109.4" y2="116.2" stroke-opacity="0.24" stroke-width="0.9"/><line x1="120.1" y1="100.2" x2="124.9" y2="107.8" stroke-opacity="0.40" stroke-width="0.8"/><line x1="115.8" y1="34.6" x2="118.7" y2="29.3" stroke-opacity="0.24" stroke-width="0.5"/><line x1="67.5" y1="91.5" x2="59.8" y2="97.5" stroke-opacity="0.47" stroke-width="1.0"/><line x1="80.1" y1="90.7" x2="66.4" y2="97.4" stroke-opacity="0.27" stroke-width="0.9"/><line x1="79.8" y1="93.1" x2="68.9" y2="99.6" stroke-opacity="0.32" stroke-width="0.9"/><line x1="144.5" y1="73.1" x2="154.0" y2="70.2" stroke-opacity="0.47" stroke-width="0.5"/><line x1="118.0" y1="109.0" x2="116.1" y2="126.4" stroke-opacity="0.27" stroke-width="1.0"/><line x1="132.0" y1="100.0" x2="146.2" y2="110.0" stroke-opacity="0.20" stroke-width="0.8"/><line x1="136.7" y1="43.9" x2="149.1" y2="31.7" stroke-opacity="0.28" stroke-width="0.5"/><line x1="99.6" y1="110.9" x2="100.5" y2="116.7" stroke-opacity="0.27" stroke-width="0.4"/><line x1="93.8" y1="100.3" x2="91.4" y2="106.5" stroke-opacity="0.34" stroke-width="0.7"/><line x1="109.0" y1="33.7" x2="103.9" y2="17.1" stroke-opacity="0.23" stroke-width="0.4"/><line x1="90.7" y1="106.5" x2="84.4" y2="122.3" stroke-opacity="0.21" stroke-width="0.6"/><line x1="73.2" y1="56.0" x2="63.1" y2="44.4" stroke-opacity="0.31" stroke-width="0.8"/><line x1="127.7" y1="40.6" x2="134.0" y2="36.6" stroke-opacity="0.49" stroke-width="0.4"/><line x1="109.0" y1="35.2" x2="107.7" y2="29.6" stroke-opacity="0.21" stroke-width="0.8"/><line x1="113.8" y1="99.6" x2="113.6" y2="107.4" stroke-opacity="0.32" stroke-width="0.8"/><line x1="72.1" y1="77.0" x2="67.3" y2="79.0" stroke-opacity="0.16" stroke-width="0.6"/><line x1="78.8" y1="46.5" x2="71.5" y2="38.1" stroke-opacity="0.26" stroke-width="0.6"/><line x1="135.6" y1="45.3" x2="143.6" y2="38.6" stroke-opacity="0.31" stroke-width="0.6"/><line x1="136.3" y1="53.0" x2="153.0" y2="49.2" stroke-opacity="0.46" stroke-width="0.5"/><line x1="61.3" y1="67.7" x2="52.8" y2="69.8" stroke-opacity="0.40" stroke-width="0.5"/><line x1="76.3" y1="53.9" x2="59.9" y2="48.3" stroke-opacity="0.18" stroke-width="0.8"/><line x1="83.4" y1="100.2" x2="73.8" y2="106.5" stroke-opacity="0.33" stroke-width="0.6"/><line x1="144.7" y1="70.4" x2="153.1" y2="71.0" stroke-opacity="0.37" stroke-width="0.7"/><line x1="138.7" y1="89.3" x2="147.3" y2="96.5" stroke-opacity="0.49" stroke-width="0.6"/><line x1="74.7" y1="81.0" x2="62.0" y2="89.7" stroke-opacity="0.44" stroke-width="0.9"/><line x1="104.7" y1="110.8" x2="105.2" y2="122.4" stroke-opacity="0.34" stroke-width="1.0"/><line x1="67.6" y1="72.3" x2="59.1" y2="70.2" stroke-opacity="0.33" stroke-width="0.6"/><line x1="117.6" y1="100.9" x2="118.6" y2="116.7" stroke-opacity="0.49" stroke-width="1.0"/><line x1="89.2" y1="33.6" x2="87.3" y2="19.5" stroke-opacity="0.43" stroke-width="0.5"/><line x1="120.3" y1="39.0" x2="126.1" y2="33.2" stroke-opacity="0.16" stroke-width="0.7"/><line x1="82.6" y1="103.0" x2="72.0" y2="110.4" stroke-opacity="0.48" stroke-width="0.8"/><line x1="143.5" y1="85.0" x2="147.8" y2="89.8" stroke-opacity="0.45" stroke-width="0.6"/><line x1="122.1" y1="105.3" x2="121.6" y2="120.2" stroke-opacity="0.37" stroke-width="0.5"/><line x1="101.2" y1="39.4" x2="102.7" y2="23.2" stroke-opacity="0.42" stroke-width="0.9"/><line x1="65.8" y1="52.6" x2="53.7" y2="47.1" stroke-opacity="0.28" stroke-width="0.6"/><line x1="140.1" y1="74.6" x2="155.3" y2="73.1" stroke-opacity="0.38" stroke-width="0.9"/><line x1="92.7" y1="35.9" x2="87.9" y2="28.1" stroke-opacity="0.22" stroke-width="0.8"/><line x1="88.7" y1="31.9" x2="88.6" y2="22.7" stroke-opacity="0.47" stroke-width="0.6"/><line x1="144.4" y1="58.9" x2="161.9" y2="57.9" stroke-opacity="0.27" stroke-width="0.6"/><line x1="67.8" y1="64.9" x2="63.0" y2="62.5" stroke-opacity="0.34" stroke-width="0.7"/><line x1="104.8" y1="36.8" x2="105.1" y2="29.3" stroke-opacity="0.23" stroke-width="0.6"/><line x1="135.9" y1="83.1" x2="144.5" y2="87.4" stroke-opacity="0.48" stroke-width="0.8"/><line x1="73.8" y1="87.9" x2="66.9" y2="92.2" stroke-opacity="0.49" stroke-width="0.5"/><line x1="68.5" y1="85.7" x2="54.7" y2="91.1" stroke-opacity="0.37" stroke-width="1.0"/><line x1="135.1" y1="50.9" x2="147.0" y2="48.9" stroke-opacity="0.33" stroke-width="0.5"/><line x1="109.3" y1="39.2" x2="110.4" y2="32.4" stroke-opacity="0.25" stroke-width="0.8"/><line x1="100.7" y1="36.4" x2="100.5" y2="21.4" stroke-opacity="0.40" stroke-width="0.7"/><line x1="75.2" y1="83.0" x2="64.1" y2="83.1" stroke-opacity="0.46" stroke-width="0.4"/><line x1="138.3" y1="84.4" x2="151.3" y2="89.8" stroke-opacity="0.19" stroke-width="0.7"/><line x1="68.6" y1="52.7" x2="60.1" y2="47.0" stroke-opacity="0.39" stroke-width="0.8"/><line x1="145.6" y1="81.1" x2="152.2" y2="80.4" stroke-opacity="0.32" stroke-width="0.4"/><line x1="139.5" y1="85.4" x2="150.5" y2="86.5" stroke-opacity="0.48" stroke-width="0.9"/><line x1="66.3" y1="73.1" x2="57.8" y2="70.0" stroke-opacity="0.19" stroke-width="0.6"/><line x1="113.9" y1="109.7" x2="116.9" y2="121.0" stroke-opacity="0.29" stroke-width="0.9"/><line x1="104.0" y1="109.5" x2="104.0" y2="123.7" stroke-opacity="0.28" stroke-width="0.7"/><line x1="71.2" y1="79.9" x2="59.0" y2="84.7" stroke-opacity="0.26" stroke-width="0.9"/><line x1="69.1" y1="80.0" x2="53.6" y2="85.2" stroke-opacity="0.28" stroke-width="0.9"/><line x1="147.8" y1="64.2" x2="158.1" y2="64.2" stroke-opacity="0.41" stroke-width="0.6"/><line x1="98.8" y1="29.1" x2="98.6" y2="15.6" stroke-opacity="0.30" stroke-width="0.8"/><line x1="112.3" y1="108.9" x2="109.0" y2="120.4" stroke-opacity="0.27" stroke-width="0.8"/><line x1="143.4" y1="73.7" x2="158.3" y2="72.0" stroke-opacity="0.36" stroke-width="0.5"/><line x1="69.9" y1="95.0" x2="62.6" y2="97.0" stroke-opacity="0.17" stroke-width="0.7"/><line x1="124.6" y1="33.9" x2="129.7" y2="25.2" stroke-opacity="0.40" stroke-width="0.9"/><line x1="105.2" y1="33.0" x2="106.5" y2="24.8" stroke-opacity="0.35" stroke-width="0.7"/><line x1="140.0" y1="67.4" x2="154.7" y2="63.8" stroke-opacity="0.40" stroke-width="1.0"/><line x1="100.0" y1="106.5" x2="98.2" y2="118.2" stroke-opacity="0.21" stroke-width="0.8"/><line x1="138.0" y1="46.4" x2="146.1" y2="43.0" stroke-opacity="0.30" stroke-width="0.5"/><line x1="75.9" y1="48.0" x2="70.6" y2="37.4" stroke-opacity="0.35" stroke-width="1.0"/><line x1="80.8" y1="101.3" x2="78.1" y2="106.6" stroke-opacity="0.39" stroke-width="0.8"/><line x1="123.6" y1="39.4" x2="126.7" y2="31.4" stroke-opacity="0.34" stroke-width="0.4"/><line x1="77.3" y1="96.9" x2="73.3" y2="102.6" stroke-opacity="0.46" stroke-width="1.0"/><line x1="106.1" y1="102.3" x2="108.4" y2="108.4" stroke-opacity="0.43" stroke-width="0.8"/><line x1="102.5" y1="105.8" x2="107.1" y2="119.1" stroke-opacity="0.44" stroke-width="0.9"/><line x1="115.9" y1="107.4" x2="121.3" y2="120.4" stroke-opacity="0.46" stroke-width="0.5"/><line x1="70.1" y1="75.5" x2="59.5" y2="74.3" stroke-opacity="0.35" stroke-width="0.8"/><line x1="141.1" y1="67.3" x2="149.0" y2="67.5" stroke-opacity="0.20" stroke-width="1.0"/><line x1="85.4" y1="99.8" x2="77.3" y2="106.6" stroke-opacity="0.47" stroke-width="0.8"/><line x1="123.5" y1="100.3" x2="133.1" y2="110.7" stroke-opacity="0.46" stroke-width="0.9"/><line x1="111.4" y1="104.1" x2="111.1" y2="112.1" stroke-opacity="0.17" stroke-width="0.8"/><line x1="145.7" y1="85.4" x2="156.5" y2="90.8" stroke-opacity="0.18" stroke-width="0.4"/><line x1="79.0" y1="103.4" x2="68.4" y2="110.5" stroke-opacity="0.17" stroke-width="0.5"/><line x1="146.8" y1="75.0" x2="154.1" y2="74.5" stroke-opacity="0.38" stroke-width="0.8"/><line x1="89.2" y1="102.1" x2="84.9" y2="109.7" stroke-opacity="0.27" stroke-width="0.6"/><line x1="106.3" y1="103.7" x2="109.8" y2="111.3" stroke-opacity="0.26" stroke-width="0.8"/><line x1="102.0" y1="101.4" x2="100.6" y2="117.3" stroke-opacity="0.33" stroke-width="0.6"/><line x1="137.8" y1="44.5" x2="148.8" y2="37.5" stroke-opacity="0.39" stroke-width="0.7"/><line x1="74.1" y1="88.1" x2="64.4" y2="94.3" stroke-opacity="0.34" stroke-width="0.7"/><line x1="116.5" y1="30.5" x2="115.0" y2="22.7" stroke-opacity="0.26" stroke-width="0.4"/><line x1="117.6" y1="34.0" x2="117.7" y2="25.3" stroke-opacity="0.45" stroke-width="0.9"/><line x1="89.4" y1="34.9" x2="82.9" y2="21.7" stroke-opacity="0.29" stroke-width="0.7"/><line x1="138.8" y1="41.4" x2="154.1" y2="34.1" stroke-opacity="0.18" stroke-width="0.5"/><line x1="144.6" y1="63.4" x2="155.6" y2="59.3" stroke-opacity="0.45" stroke-width="0.7"/><line x1="139.3" y1="68.1" x2="155.0" y2="59.5" stroke-opacity="0.20" stroke-width="0.6"/><line x1="84.4" y1="45.8" x2="80.8" y2="34.0" stroke-opacity="0.30" stroke-width="0.9"/><line x1="72.7" y1="49.8" x2="66.5" y2="46.0" stroke-opacity="0.47" stroke-width="0.8"/><line x1="113.9" y1="104.7" x2="118.1" y2="116.0" stroke-opacity="0.35" stroke-width="0.8"/><line x1="141.0" y1="73.7" x2="154.3" y2="71.7" stroke-opacity="0.18" stroke-width="0.9"/><line x1="83.6" y1="105.9" x2="81.6" y2="118.0" stroke-opacity="0.37" stroke-width="0.6"/><line x1="122.4" y1="34.4" x2="122.4" y2="19.5" stroke-opacity="0.16" stroke-width="0.9"/><line x1="128.2" y1="95.2" x2="132.7" y2="98.1" stroke-opacity="0.32" stroke-width="1.0"/><line x1="90.5" y1="100.0" x2="88.0" y2="115.6" stroke-opacity="0.37" stroke-width="0.8"/><line x1="136.3" y1="57.8" x2="147.0" y2="51.8" stroke-opacity="0.44" stroke-width="0.6"/><line x1="98.4" y1="38.4" x2="100.7" y2="27.2" stroke-opacity="0.23" stroke-width="0.6"/><line x1="141.5" y1="51.1" x2="145.6" y2="46.9" stroke-opacity="0.23" stroke-width="0.6"/><line x1="129.1" y1="38.1" x2="141.1" y2="25.1" stroke-opacity="0.37" stroke-width="0.6"/><line x1="98.1" y1="34.7" x2="96.9" y2="29.1" stroke-opacity="0.28" stroke-width="0.7"/><line x1="137.2" y1="79.2" x2="154.7" y2="82.6" stroke-opacity="0.27" stroke-width="0.5"/><line x1="69.3" y1="47.5" x2="63.1" y2="43.5" stroke-opacity="0.32" stroke-width="0.9"/><line x1="73.5" y1="56.9" x2="67.4" y2="52.6" stroke-opacity="0.18" stroke-width="0.9"/><line x1="140.0" y1="76.8" x2="149.6" y2="82.3" stroke-opacity="0.37" stroke-width="0.8"/><line x1="108.9" y1="31.4" x2="110.9" y2="26.1" stroke-opacity="0.20" stroke-width="0.5"/><line x1="137.9" y1="77.1" x2="154.1" y2="79.3" stroke-opacity="0.18" stroke-width="0.4"/><line x1="128.8" y1="39.3" x2="131.9" y2="22.7" stroke-opacity="0.19" stroke-width="0.6"/><line x1="118.2" y1="99.4" x2="120.1" y2="106.8" stroke-opacity="0.21" stroke-width="0.5"/><line x1="69.8" y1="62.3" x2="63.1" y2="60.4" stroke-opacity="0.33" stroke-width="0.6"/><line x1="73.5" y1="74.9" x2="61.8" y2="80.4" stroke-opacity="0.27" stroke-width="0.4"/><line x1="136.3" y1="45.9" x2="144.2" y2="39.7" stroke-opacity="0.48" stroke-width="0.5"/><line x1="75.3" y1="95.8" x2="66.9" y2="100.9" stroke-opacity="0.47" stroke-width="0.4"/><line x1="98.2" y1="102.9" x2="91.5" y2="116.0" stroke-opacity="0.39" stroke-width="1.0"/><line x1="120.7" y1="102.1" x2="123.3" y2="117.9" stroke-opacity="0.19" stroke-width="1.0"/><line x1="103.4" y1="29.6" x2="103.8" y2="19.9" stroke-opacity="0.49" stroke-width="0.9"/><line x1="67.4" y1="51.0" x2="54.7" y2="38.3" stroke-opacity="0.38" stroke-width="1.0"/><line x1="129.2" y1="97.5" x2="139.6" y2="104.1" stroke-opacity="0.42" stroke-width="0.4"/><line x1="81.2" y1="45.7" x2="75.5" y2="38.5" stroke-opacity="0.22" stroke-width="0.7"/><line x1="134.0" y1="37.3" x2="138.4" y2="30.1" stroke-opacity="0.39" stroke-width="0.5"/><line x1="126.4" y1="43.5" x2="132.0" y2="32.7" stroke-opacity="0.15" stroke-width="0.4"/><line x1="142.5" y1="70.4" x2="150.2" y2="74.2" stroke-opacity="0.37" stroke-width="0.4"/><line x1="98.5" y1="37.8" x2="98.4" y2="26.5" stroke-opacity="0.45" stroke-width="1.0"/><line x1="74.0" y1="86.2" x2="66.0" y2="92.5" stroke-opacity="0.41" stroke-width="0.7"/><line x1="92.5" y1="40.6" x2="92.7" y2="25.4" stroke-opacity="0.22" stroke-width="0.8"/><line x1="123.2" y1="96.1" x2="130.9" y2="103.0" stroke-opacity="0.41" stroke-width="0.7"/><line x1="85.6" y1="33.0" x2="81.4" y2="29.1" stroke-opacity="0.16" stroke-width="0.7"/><line x1="124.5" y1="35.8" x2="133.1" y2="27.3" stroke-opacity="0.28" stroke-width="0.5"/><line x1="85.4" y1="46.3" x2="78.3" y2="42.7" stroke-opacity="0.21" stroke-width="0.4"/><line x1="72.7" y1="63.7" x2="61.3" y2="57.7" stroke-opacity="0.27" stroke-width="0.5"/><line x1="86.2" y1="35.9" x2="79.1" y2="21.0" stroke-opacity="0.35" stroke-width="0.9"/><line x1="86.3" y1="32.6" x2="84.4" y2="24.0" stroke-opacity="0.37" stroke-width="0.7"/><line x1="144.3" y1="72.4" x2="152.6" y2="73.8" stroke-opacity="0.33" stroke-width="0.7"/><line x1="137.8" y1="81.5" x2="148.9" y2="88.0" stroke-opacity="0.50" stroke-width="0.9"/><line x1="96.5" y1="104.5" x2="90.7" y2="114.5" stroke-opacity="0.29" stroke-width="1.0"/><line x1="68.8" y1="73.5" x2="57.8" y2="76.1" stroke-opacity="0.50" stroke-width="0.4"/><line x1="79.0" y1="88.4" x2="70.9" y2="99.6" stroke-opacity="0.20" stroke-width="0.7"/><line x1="72.3" y1="46.5" x2="62.7" y2="41.8" stroke-opacity="0.28" stroke-width="0.9"/><line x1="113.5" y1="99.6" x2="117.5" y2="115.6" stroke-opacity="0.20" stroke-width="0.5"/><line x1="138.3" y1="45.2" x2="143.3" y2="42.2" stroke-opacity="0.22" stroke-width="0.7"/><line x1="79.9" y1="51.1" x2="64.9" y2="42.7" stroke-opacity="0.20" stroke-width="0.9"/><line x1="131.4" y1="89.4" x2="142.1" y2="97.7" stroke-opacity="0.47" stroke-width="0.9"/><line x1="114.9" y1="99.6" x2="118.7" y2="111.9" stroke-opacity="0.26" stroke-width="1.0"/><line x1="116.5" y1="106.5" x2="115.7" y2="112.4" stroke-opacity="0.48" stroke-width="0.8"/><line x1="88.2" y1="105.0" x2="77.4" y2="117.8" stroke-opacity="0.16" stroke-width="0.7"/><line x1="131.1" y1="98.2" x2="137.2" y2="114.5" stroke-opacity="0.24" stroke-width="0.7"/><line x1="91.8" y1="99.4" x2="82.8" y2="111.0" stroke-opacity="0.27" stroke-width="0.7"/><line x1="92.3" y1="33.4" x2="85.3" y2="24.8" stroke-opacity="0.18" stroke-width="0.5"/><line x1="123.8" y1="38.0" x2="128.5" y2="25.5" stroke-opacity="0.28" stroke-width="0.5"/><line x1="145.5" y1="64.1" x2="152.2" y2="64.2" stroke-opacity="0.36" stroke-width="0.8"/><line x1="111.0" y1="32.9" x2="119.5" y2="18.9" stroke-opacity="0.29" stroke-width="0.8"/><line x1="79.5" y1="94.9" x2="71.8" y2="100.9" stroke-opacity="0.27" stroke-width="0.6"/><line x1="130.3" y1="37.5" x2="141.2" y2="29.1" stroke-opacity="0.29" stroke-width="0.8"/><line x1="105.7" y1="103.9" x2="104.0" y2="110.0" stroke-opacity="0.47" stroke-width="0.6"/><line x1="81.6" y1="91.9" x2="76.1" y2="96.0" stroke-opacity="0.46" stroke-width="0.5"/><line x1="104.8" y1="109.2" x2="101.9" y2="116.6" stroke-opacity="0.27" stroke-width="0.7"/><line x1="116.8" y1="102.1" x2="121.9" y2="111.3" stroke-opacity="0.41" stroke-width="0.4"/><line x1="78.7" y1="39.6" x2="71.0" y2="34.4" stroke-opacity="0.19" stroke-width="0.4"/><line x1="116.5" y1="34.0" x2="117.6" y2="28.9" stroke-opacity="0.36" stroke-width="0.6"/><line x1="142.8" y1="77.6" x2="150.5" y2="83.4" stroke-opacity="0.28" stroke-width="1.0"/><line x1="132.8" y1="42.7" x2="138.4" y2="39.2" stroke-opacity="0.18" stroke-width="0.7"/><line x1="133.5" y1="88.0" x2="143.4" y2="91.1" stroke-opacity="0.50" stroke-width="0.7"/><line x1="141.5" y1="45.0" x2="154.4" y2="37.7" stroke-opacity="0.32" stroke-width="0.9"/><line x1="89.3" y1="41.9" x2="82.8" y2="32.0" stroke-opacity="0.33" stroke-width="0.8"/><line x1="91.2" y1="35.7" x2="89.8" y2="20.5" stroke-opacity="0.18" stroke-width="0.5"/><line x1="138.9" y1="79.4" x2="156.3" y2="81.6" stroke-opacity="0.30" stroke-width="0.7"/><line x1="73.0" y1="56.8" x2="58.3" y2="53.0" stroke-opacity="0.45" stroke-width="0.9"/><line x1="145.3" y1="70.3" x2="151.1" y2="72.4" stroke-opacity="0.17" stroke-width="0.6"/><line x1="110.7" y1="33.1" x2="111.2" y2="19.4" stroke-opacity="0.33" stroke-width="0.5"/><line x1="71.3" y1="77.8" x2="59.9" y2="85.5" stroke-opacity="0.20" stroke-width="0.5"/><line x1="67.1" y1="62.4" x2="63.1" y2="59.4" stroke-opacity="0.44" stroke-width="0.6"/><line x1="129.2" y1="103.6" x2="142.6" y2="115.1" stroke-opacity="0.41" stroke-width="0.9"/><line x1="138.3" y1="57.4" x2="143.4" y2="53.2" stroke-opacity="0.23" stroke-width="0.9"/><line x1="138.4" y1="50.8" x2="143.5" y2="46.5" stroke-opacity="0.23" stroke-width="0.8"/><line x1="98.1" y1="31.3" x2="95.7" y2="20.9" stroke-opacity="0.31" stroke-width="0.6"/><line x1="66.6" y1="80.7" x2="53.7" y2="86.7" stroke-opacity="0.35" stroke-width="0.5"/><line x1="141.8" y1="79.8" x2="151.4" y2="78.4" stroke-opacity="0.18" stroke-width="0.7"/><line x1="146.2" y1="55.8" x2="150.8" y2="53.1" stroke-opacity="0.28" stroke-width="0.6"/><line x1="132.0" y1="98.2" x2="143.5" y2="109.1" stroke-opacity="0.21" stroke-width="0.5"/><line x1="147.9" y1="73.7" x2="155.5" y2="76.1" stroke-opacity="0.43" stroke-width="0.5"/><line x1="119.6" y1="101.5" x2="122.2" y2="116.3" stroke-opacity="0.26" stroke-width="0.7"/><line x1="82.5" y1="98.3" x2="75.9" y2="112.1" stroke-opacity="0.43" stroke-width="1.0"/><line x1="70.2" y1="45.4" x2="54.0" y2="39.7" stroke-opacity="0.50" stroke-width="0.5"/><line x1="117.4" y1="40.2" x2="120.0" y2="31.6" stroke-opacity="0.44" stroke-width="0.8"/><line x1="118.5" y1="109.1" x2="123.0" y2="124.7" stroke-opacity="0.17" stroke-width="0.6"/><line x1="96.1" y1="103.9" x2="90.1" y2="120.1" stroke-opacity="0.44" stroke-width="0.4"/><line x1="107.2" y1="108.8" x2="109.7" y2="117.9" stroke-opacity="0.17" stroke-width="0.4"/><line x1="72.5" y1="89.2" x2="63.5" y2="94.0" stroke-opacity="0.25" stroke-width="0.4"/><line x1="89.2" y1="39.6" x2="83.0" y2="30.1" stroke-opacity="0.24" stroke-width="0.4"/><line x1="95.6" y1="102.3" x2="96.4" y2="108.7" stroke-opacity="0.32" stroke-width="0.4"/><line x1="132.8" y1="46.2" x2="140.7" y2="39.0" stroke-opacity="0.16" stroke-width="0.5"/><line x1="114.7" y1="34.1" x2="115.6" y2="22.7" stroke-opacity="0.41" stroke-width="0.7"/><line x1="117.3" y1="31.3" x2="124.8" y2="16.5" stroke-opacity="0.39" stroke-width="0.7"/><line x1="67.2" y1="62.3" x2="56.8" y2="56.6" stroke-opacity="0.45" stroke-width="0.4"/><line x1="106.5" y1="32.5" x2="111.3" y2="20.6" stroke-opacity="0.17" stroke-width="0.7"/><line x1="74.6" y1="99.2" x2="69.2" y2="103.9" stroke-opacity="0.20" stroke-width="0.9"/><line x1="64.4" y1="72.7" x2="55.8" y2="70.2" stroke-opacity="0.15" stroke-width="0.5"/><line x1="101.5" y1="29.6" x2="96.9" y2="15.2" stroke-opacity="0.18" stroke-width="0.8"/><line x1="102.1" y1="39.3" x2="100.6" y2="22.2" stroke-opacity="0.16" stroke-width="0.7"/><line x1="88.3" y1="96.8" x2="74.9" y2="106.4" stroke-opacity="0.19" stroke-width="0.7"/><line x1="100.0" y1="107.7" x2="100.0" y2="114.2" stroke-opacity="0.29" stroke-width="0.7"/><line x1="69.4" y1="84.8" x2="52.1" y2="85.1" stroke-opacity="0.47" stroke-width="0.9"/><line x1="110.8" y1="102.8" x2="110.9" y2="113.8" stroke-opacity="0.36" stroke-width="0.6"/><line x1="142.3" y1="68.2" x2="147.1" y2="66.1" stroke-opacity="0.22" stroke-width="0.8"/><line x1="123.8" y1="44.1" x2="126.5" y2="36.5" stroke-opacity="0.43" stroke-width="0.9"/><line x1="103.2" y1="101.3" x2="94.6" y2="116.7" stroke-opacity="0.40" stroke-width="0.7"/><line x1="105.2" y1="30.7" x2="102.6" y2="19.4" stroke-opacity="0.33" stroke-width="0.8"/><line x1="87.8" y1="103.7" x2="82.4" y2="108.1" stroke-opacity="0.22" stroke-width="0.5"/><line x1="149.0" y1="59.8" x2="166.0" y2="60.8" stroke-opacity="0.45" stroke-width="0.9"/><line x1="75.5" y1="57.3" x2="64.6" y2="47.8" stroke-opacity="0.44" stroke-width="0.4"/><line x1="144.6" y1="84.6" x2="152.9" y2="92.2" stroke-opacity="0.50" stroke-width="0.7"/><line x1="87.6" y1="36.0" x2="79.8" y2="24.4" stroke-opacity="0.37" stroke-width="0.4"/><line x1="139.6" y1="47.2" x2="151.8" y2="37.8" stroke-opacity="0.22" stroke-width="0.7"/><line x1="89.4" y1="36.7" x2="84.4" y2="32.7" stroke-opacity="0.29" stroke-width="0.5"/><line x1="111.1" y1="102.5" x2="110.8" y2="112.9" stroke-opacity="0.47" stroke-width="0.8"/><line x1="149.0" y1="75.2" x2="161.1" y2="79.5" stroke-opacity="0.36" stroke-width="0.6"/><line x1="88.3" y1="96.3" x2="86.1" y2="109.8" stroke-opacity="0.39" stroke-width="0.9"/><line x1="86.2" y1="37.5" x2="84.7" y2="22.1" stroke-opacity="0.43" stroke-width="1.0"/><line x1="74.5" y1="77.6" x2="61.6" y2="79.3" stroke-opacity="0.45" stroke-width="0.8"/><line x1="84.8" y1="92.9" x2="73.2" y2="103.7" stroke-opacity="0.49" stroke-width="0.8"/><line x1="131.3" y1="38.6" x2="141.6" y2="23.9" stroke-opacity="0.46" stroke-width="0.6"/><line x1="142.4" y1="72.4" x2="150.7" y2="77.1" stroke-opacity="0.29" stroke-width="0.6"/><line x1="93.8" y1="40.8" x2="89.7" y2="32.8" stroke-opacity="0.19" stroke-width="0.8"/><line x1="68.4" y1="88.5" x2="59.0" y2="89.0" stroke-opacity="0.22" stroke-width="0.7"/><line x1="110.8" y1="100.1" x2="109.0" y2="108.8" stroke-opacity="0.25" stroke-width="0.7"/><line x1="282.2" y1="136.7" x2="293.2" y2="124.3" stroke-opacity="0.36" stroke-width="0.7"/><line x1="219.0" y1="146.8" x2="211.6" y2="145.8" stroke-opacity="0.23" stroke-width="0.7"/><line x1="276.7" y1="155.3" x2="290.8" y2="156.5" stroke-opacity="0.33" stroke-width="0.8"/><line x1="229.8" y1="170.3" x2="219.3" y2="181.3" stroke-opacity="0.38" stroke-width="0.8"/><line x1="279.5" y1="146.5" x2="293.7" y2="142.1" stroke-opacity="0.35" stroke-width="0.8"/><line x1="236.6" y1="174.1" x2="230.3" y2="183.3" stroke-opacity="0.36" stroke-width="0.7"/><line x1="229.2" y1="131.7" x2="223.8" y2="126.7" stroke-opacity="0.44" stroke-width="0.5"/><line x1="270.0" y1="167.7" x2="274.7" y2="170.5" stroke-opacity="0.35" stroke-width="0.9"/><line x1="232.4" y1="175.2" x2="229.5" y2="183.5" stroke-opacity="0.42" stroke-width="0.7"/><line x1="246.5" y1="176.2" x2="242.9" y2="191.0" stroke-opacity="0.44" stroke-width="0.5"/><line x1="211.4" y1="142.4" x2="201.6" y2="134.4" stroke-opacity="0.21" stroke-width="1.0"/><line x1="278.6" y1="161.0" x2="282.9" y2="164.1" stroke-opacity="0.39" stroke-width="1.0"/><line x1="261.0" y1="120.9" x2="269.5" y2="112.4" stroke-opacity="0.41" stroke-width="0.6"/><line x1="279.8" y1="147.1" x2="286.2" y2="143.3" stroke-opacity="0.31" stroke-width="0.5"/><line x1="283.2" y1="138.3" x2="288.7" y2="132.9" stroke-opacity="0.34" stroke-width="0.5"/><line x1="212.4" y1="143.0" x2="204.3" y2="141.4" stroke-opacity="0.47" stroke-width="0.7"/><line x1="227.2" y1="178.2" x2="214.6" y2="187.4" stroke-opacity="0.39" stroke-width="0.6"/><line x1="235.0" y1="122.1" x2="227.5" y2="111.0" stroke-opacity="0.25" stroke-width="0.6"/><line x1="252.6" y1="122.9" x2="257.7" y2="111.8" stroke-opacity="0.19" stroke-width="0.8"/><line x1="231.1" y1="176.6" x2="226.5" y2="191.8" stroke-opacity="0.48" stroke-width="0.4"/><line x1="216.6" y1="140.6" x2="209.3" y2="137.1" stroke-opacity="0.31" stroke-width="0.7"/><line x1="242.4" y1="128.2" x2="243.0" y2="118.3" stroke-opacity="0.20" stroke-width="0.9"/><line x1="258.2" y1="180.3" x2="260.6" y2="187.1" stroke-opacity="0.30" stroke-width="0.4"/><line x1="237.6" y1="124.7" x2="233.7" y2="111.3" stroke-opacity="0.34" stroke-width="0.7"/><line x1="236.8" y1="182.1" x2="233.1" y2="187.0" stroke-opacity="0.45" stroke-width="0.7"/><line x1="254.0" y1="121.9" x2="253.7" y2="109.1" stroke-opacity="0.26" stroke-width="0.6"/><line x1="235.6" y1="182.4" x2="233.5" y2="191.6" stroke-opacity="0.30" stroke-width="0.9"/><line x1="214.2" y1="155.5" x2="206.4" y2="158.3" stroke-opacity="0.18" stroke-width="0.5"/><line x1="244.7" y1="183.0" x2="247.7" y2="194.1" stroke-opacity="0.31" stroke-width="0.5"/><line x1="217.9" y1="140.3" x2="202.0" y2="137.1" stroke-opacity="0.45" stroke-width="0.5"/><line x1="282.8" y1="148.3" x2="288.3" y2="149.2" stroke-opacity="0.25" stroke-width="0.6"/><line x1="270.5" y1="176.6" x2="273.1" y2="182.2" stroke-opacity="0.29" stroke-width="0.8"/><line x1="240.3" y1="175.1" x2="233.5" y2="190.6" stroke-opacity="0.21" stroke-width="1.0"/><line x1="273.6" y1="138.1" x2="278.3" y2="135.8" stroke-opacity="0.20" stroke-width="0.8"/><line x1="212.9" y1="157.4" x2="200.5" y2="156.8" stroke-opacity="0.44" stroke-width="0.8"/><line x1="221.4" y1="137.0" x2="214.8" y2="135.6" stroke-opacity="0.45" stroke-width="0.5"/><line x1="219.8" y1="163.4" x2="207.9" y2="168.8" stroke-opacity="0.45" stroke-width="0.7"/><line x1="225.2" y1="174.2" x2="212.3" y2="181.1" stroke-opacity="0.26" stroke-width="0.9"/><line x1="286.5" y1="147.7" x2="293.1" y2="146.2" stroke-opacity="0.42" stroke-width="0.9"/><line x1="279.4" y1="158.2" x2="292.2" y2="164.9" stroke-opacity="0.34" stroke-width="0.5"/><line x1="224.1" y1="164.9" x2="216.8" y2="170.4" stroke-opacity="0.44" stroke-width="0.8"/><line x1="221.6" y1="164.8" x2="213.1" y2="168.3" stroke-opacity="0.31" stroke-width="0.5"/><line x1="263.0" y1="125.3" x2="271.1" y2="109.8" stroke-opacity="0.37" stroke-width="0.7"/><line x1="218.4" y1="131.2" x2="206.3" y2="118.2" stroke-opacity="0.30" stroke-width="0.4"/><line x1="265.4" y1="128.4" x2="267.0" y2="118.6" stroke-opacity="0.16" stroke-width="0.6"/><line x1="283.7" y1="146.7" x2="297.9" y2="146.6" stroke-opacity="0.25" stroke-width="0.5"/><line x1="225.0" y1="136.9" x2="215.0" y2="129.2" stroke-opacity="0.34" stroke-width="0.5"/><line x1="278.3" y1="163.1" x2="284.2" y2="166.7" stroke-opacity="0.26" stroke-width="0.8"/><line x1="248.0" y1="122.1" x2="244.9" y2="110.7" stroke-opacity="0.27" stroke-width="1.0"/><line x1="244.4" y1="177.7" x2="242.6" y2="189.0" stroke-opacity="0.43" stroke-width="0.6"/><line x1="275.6" y1="146.0" x2="290.6" y2="143.4" stroke-opacity="0.47" stroke-width="0.5"/><line x1="233.7" y1="121.3" x2="224.6" y2="111.1" stroke-opacity="0.47" stroke-width="1.0"/><line x1="276.5" y1="171.6" x2="282.2" y2="173.5" stroke-opacity="0.43" stroke-width="0.8"/><line x1="281.7" y1="143.6" x2="292.1" y2="138.3" stroke-opacity="0.35" stroke-width="1.0"/><line x1="225.2" y1="126.1" x2="222.0" y2="119.3" stroke-opacity="0.41" stroke-width="0.4"/><line x1="260.8" y1="128.5" x2="261.2" y2="120.7" stroke-opacity="0.38" stroke-width="0.5"/><line x1="275.8" y1="147.9" x2="291.2" y2="149.1" stroke-opacity="0.35" stroke-width="0.7"/><line x1="258.4" y1="123.2" x2="262.1" y2="117.5" stroke-opacity="0.27" stroke-width="0.8"/><line x1="210.2" y1="149.0" x2="200.6" y2="145.0" stroke-opacity="0.18" stroke-width="0.6"/><line x1="231.4" y1="125.7" x2="220.4" y2="114.2" stroke-opacity="0.43" stroke-width="0.9"/><line x1="266.4" y1="171.1" x2="269.5" y2="183.3" stroke-opacity="0.36" stroke-width="0.7"/><line x1="211.1" y1="150.2" x2="199.4" y2="149.3" stroke-opacity="0.36" stroke-width="1.0"/><line x1="259.6" y1="121.6" x2="262.9" y2="113.8" stroke-opacity="0.44" stroke-width="0.8"/><line x1="284.3" y1="141.9" x2="290.7" y2="140.0" stroke-opacity="0.28" stroke-width="0.5"/><line x1="209.2" y1="151.3" x2="195.1" y2="156.6" stroke-opacity="0.24" stroke-width="0.6"/><line x1="272.8" y1="133.0" x2="278.4" y2="128.6" stroke-opacity="0.24" stroke-width="0.4"/><line x1="215.5" y1="133.4" x2="204.9" y2="122.6" stroke-opacity="0.20" stroke-width="0.7"/><line x1="224.3" y1="128.2" x2="214.6" y2="123.4" stroke-opacity="0.47" stroke-width="0.6"/><line x1="245.6" y1="123.5" x2="242.3" y2="108.8" stroke-opacity="0.18" stroke-width="0.7"/><line x1="211.6" y1="155.4" x2="201.3" y2="155.1" stroke-opacity="0.28" stroke-width="0.8"/><line x1="265.3" y1="179.8" x2="278.9" y2="190.5" stroke-opacity="0.45" stroke-width="0.9"/><line x1="237.8" y1="128.3" x2="236.1" y2="113.9" stroke-opacity="0.37" stroke-width="1.0"/><line x1="281.1" y1="141.8" x2="294.6" y2="131.5" stroke-opacity="0.25" stroke-width="0.7"/><line x1="209.9" y1="146.9" x2="197.1" y2="143.6" stroke-opacity="0.37" stroke-width="1.0"/><line x1="218.7" y1="169.4" x2="209.0" y2="177.8" stroke-opacity="0.27" stroke-width="0.5"/><line x1="279.7" y1="153.3" x2="288.2" y2="150.6" stroke-opacity="0.32" stroke-width="0.6"/><line x1="280.7" y1="137.6" x2="294.2" y2="135.5" stroke-opacity="0.25" stroke-width="0.5"/><line x1="224.4" y1="135.1" x2="209.9" y2="124.7" stroke-opacity="0.46" stroke-width="0.5"/><line x1="277.0" y1="167.9" x2="290.1" y2="173.0" stroke-opacity="0.47" stroke-width="1.0"/><line x1="233.1" y1="121.2" x2="221.5" y2="107.7" stroke-opacity="0.41" stroke-width="0.8"/><line x1="244.4" y1="124.8" x2="244.0" y2="112.7" stroke-opacity="0.45" stroke-width="0.4"/><line x1="225.7" y1="170.3" x2="219.1" y2="184.2" stroke-opacity="0.17" stroke-width="0.5"/><line x1="272.5" y1="170.0" x2="285.9" y2="179.2" stroke-opacity="0.19" stroke-width="0.8"/><line x1="231.0" y1="176.7" x2="224.2" y2="189.8" stroke-opacity="0.41" stroke-width="0.8"/><line x1="269.7" y1="126.8" x2="282.4" y2="115.9" stroke-opacity="0.25" stroke-width="0.7"/><line x1="253.1" y1="120.8" x2="259.4" y2="107.7" stroke-opacity="0.44" stroke-width="0.7"/><line x1="229.9" y1="132.8" x2="224.7" y2="122.9" stroke-opacity="0.47" stroke-width="0.9"/><line x1="219.6" y1="161.1" x2="203.6" y2="165.1" stroke-opacity="0.22" stroke-width="0.4"/><line x1="272.8" y1="131.3" x2="278.9" y2="129.3" stroke-opacity="0.36" stroke-width="0.9"/><line x1="258.7" y1="127.0" x2="259.4" y2="115.2" stroke-opacity="0.36" stroke-width="0.7"/><line x1="255.3" y1="127.5" x2="256.4" y2="119.9" stroke-opacity="0.15" stroke-width="0.6"/><line x1="284.5" y1="144.1" x2="291.8" y2="144.6" stroke-opacity="0.23" stroke-width="0.5"/><line x1="227.7" y1="131.4" x2="221.0" y2="127.8" stroke-opacity="0.21" stroke-width="0.5"/><line x1="272.3" y1="138.8" x2="280.5" y2="130.1" stroke-opacity="0.40" stroke-width="0.4"/><line x1="223.0" y1="173.6" x2="219.7" y2="177.7" stroke-opacity="0.26" stroke-width="0.7"/><line x1="228.0" y1="133.8" x2="214.6" y2="124.6" stroke-opacity="0.42" stroke-width="0.5"/><line x1="273.1" y1="165.7" x2="278.8" y2="167.9" stroke-opacity="0.20" stroke-width="0.5"/><line x1="268.2" y1="128.5" x2="275.1" y2="119.4" stroke-opacity="0.43" stroke-width="0.4"/><line x1="281.9" y1="159.9" x2="286.8" y2="161.4" stroke-opacity="0.37" stroke-width="0.9"/><line x1="280.5" y1="151.6" x2="289.5" y2="152.3" stroke-opacity="0.16" stroke-width="0.9"/><line x1="280.8" y1="143.8" x2="294.5" y2="144.2" stroke-opacity="0.45" stroke-width="0.9"/><line x1="219.1" y1="153.5" x2="204.1" y2="150.0" stroke-opacity="0.40" stroke-width="0.6"/><line x1="282.5" y1="146.9" x2="291.5" y2="147.8" stroke-opacity="0.23" stroke-width="0.5"/><line x1="271.7" y1="137.9" x2="284.3" y2="127.5" stroke-opacity="0.35" stroke-width="0.8"/><line x1="272.9" y1="136.7" x2="278.1" y2="133.2" stroke-opacity="0.23" stroke-width="0.7"/><line x1="270.4" y1="167.2" x2="282.2" y2="170.7" stroke-opacity="0.24" stroke-width="0.6"/><line x1="278.5" y1="169.0" x2="295.0" y2="172.0" stroke-opacity="0.43" stroke-width="0.5"/><line x1="244.3" y1="127.4" x2="248.1" y2="113.2" stroke-opacity="0.24" stroke-width="0.5"/><line x1="227.8" y1="178.2" x2="223.9" y2="192.9" stroke-opacity="0.47" stroke-width="0.8"/><line x1="285.3" y1="142.8" x2="292.4" y2="142.3" stroke-opacity="0.16" stroke-width="0.5"/><line x1="218.2" y1="145.6" x2="210.4" y2="144.8" stroke-opacity="0.31" stroke-width="1.0"/><line x1="218.2" y1="137.4" x2="204.2" y2="134.1" stroke-opacity="0.43" stroke-width="0.9"/><line x1="261.0" y1="125.8" x2="261.2" y2="113.8" stroke-opacity="0.31" stroke-width="0.8"/><line x1="284.0" y1="141.6" x2="293.4" y2="140.8" stroke-opacity="0.45" stroke-width="1.0"/><line x1="234.6" y1="127.2" x2="222.1" y2="116.7" stroke-opacity="0.35" stroke-width="0.7"/><line x1="273.8" y1="131.7" x2="277.7" y2="125.1" stroke-opacity="0.16" stroke-width="0.9"/><line x1="254.7" y1="124.9" x2="256.7" y2="117.2" stroke-opacity="0.22" stroke-width="0.7"/><line x1="230.5" y1="173.7" x2="225.5" y2="186.8" stroke-opacity="0.27" stroke-width="0.7"/><line x1="275.8" y1="142.5" x2="283.3" y2="137.7" stroke-opacity="0.26" stroke-width="0.7"/><line x1="260.8" y1="128.5" x2="266.2" y2="115.2" stroke-opacity="0.35" stroke-width="0.7"/><line x1="224.0" y1="136.2" x2="213.0" y2="129.3" stroke-opacity="0.42" stroke-width="0.8"/><line x1="215.5" y1="169.5" x2="211.6" y2="175.7" stroke-opacity="0.19" stroke-width="0.8"/><line x1="278.3" y1="168.2" x2="283.9" y2="170.5" stroke-opacity="0.37" stroke-width="0.4"/><line x1="212.4" y1="165.0" x2="199.9" y2="172.2" stroke-opacity="0.47" stroke-width="0.7"/><line x1="259.9" y1="126.5" x2="265.2" y2="118.1" stroke-opacity="0.42" stroke-width="0.8"/><line x1="267.2" y1="173.9" x2="274.1" y2="179.8" stroke-opacity="0.19" stroke-width="0.8"/><line x1="268.1" y1="172.5" x2="270.6" y2="177.1" stroke-opacity="0.37" stroke-width="0.4"/><line x1="285.1" y1="141.3" x2="299.8" y2="140.8" stroke-opacity="0.40" stroke-width="0.4"/><line x1="243.6" y1="177.2" x2="242.2" y2="182.3" stroke-opacity="0.36" stroke-width="0.6"/><line x1="247.7" y1="125.6" x2="244.6" y2="117.5" stroke-opacity="0.23" stroke-width="0.9"/><line x1="211.9" y1="153.4" x2="195.7" y2="152.0" stroke-opacity="0.28" stroke-width="1.0"/><line x1="276.6" y1="164.8" x2="289.5" y2="175.0" stroke-opacity="0.27" stroke-width="0.9"/><line x1="249.8" y1="121.1" x2="251.6" y2="112.8" stroke-opacity="0.38" stroke-width="0.9"/><line x1="209.9" y1="148.9" x2="195.8" y2="151.5" stroke-opacity="0.35" stroke-width="0.5"/><line x1="224.6" y1="133.5" x2="209.7" y2="123.4" stroke-opacity="0.43" stroke-width="0.9"/><line x1="223.8" y1="172.4" x2="218.9" y2="178.7" stroke-opacity="0.30" stroke-width="0.8"/><line x1="218.2" y1="150.2" x2="204.8" y2="149.3" stroke-opacity="0.33" stroke-width="0.7"/><line x1="271.6" y1="129.4" x2="280.7" y2="119.3" stroke-opacity="0.29" stroke-width="0.7"/><line x1="233.8" y1="126.4" x2="230.0" y2="121.9" stroke-opacity="0.17" stroke-width="0.4"/><line x1="227.6" y1="172.6" x2="223.2" y2="182.6" stroke-opacity="0.23" stroke-width="0.7"/><line x1="240.2" y1="176.8" x2="234.9" y2="186.9" stroke-opacity="0.17" stroke-width="0.4"/><line x1="212.2" y1="161.8" x2="200.3" y2="167.5" stroke-opacity="0.49" stroke-width="0.8"/><line x1="265.0" y1="123.4" x2="266.1" y2="118.0" stroke-opacity="0.43" stroke-width="0.6"/><line x1="271.4" y1="137.2" x2="286.3" y2="128.7" stroke-opacity="0.29" stroke-width="0.9"/><line x1="215.7" y1="145.3" x2="209.2" y2="141.9" stroke-opacity="0.20" stroke-width="0.6"/><line x1="272.0" y1="164.1" x2="280.8" y2="165.3" stroke-opacity="0.31" stroke-width="0.6"/><line x1="280.9" y1="154.7" x2="289.6" y2="153.6" stroke-opacity="0.34" stroke-width="0.6"/><line x1="284.0" y1="162.4" x2="301.6" y2="164.2" stroke-opacity="0.38" stroke-width="0.8"/><line x1="248.3" y1="180.2" x2="250.1" y2="188.5" stroke-opacity="0.31" stroke-width="0.4"/><line x1="252.9" y1="184.1" x2="257.0" y2="198.5" stroke-opacity="0.50" stroke-width="0.6"/><line x1="266.8" y1="130.0" x2="276.1" y2="116.2" stroke-opacity="0.46" stroke-width="0.5"/><line x1="222.9" y1="168.1" x2="208.6" y2="173.1" stroke-opacity="0.20" stroke-width="0.6"/><line x1="261.5" y1="173.0" x2="266.6" y2="177.4" stroke-opacity="0.26" stroke-width="0.7"/><line x1="277.1" y1="134.7" x2="287.9" y2="124.5" stroke-opacity="0.26" stroke-width="0.6"/><line x1="251.1" y1="175.3" x2="248.7" y2="183.6" stroke-opacity="0.17" stroke-width="0.7"/><line x1="252.1" y1="182.1" x2="252.7" y2="187.6" stroke-opacity="0.40" stroke-width="0.7"/><line x1="271.4" y1="176.6" x2="272.9" y2="181.6" stroke-opacity="0.44" stroke-width="0.9"/><line x1="269.3" y1="131.2" x2="277.8" y2="121.1" stroke-opacity="0.35" stroke-width="0.6"/><line x1="267.2" y1="130.4" x2="270.5" y2="118.6" stroke-opacity="0.17" stroke-width="0.9"/><line x1="228.0" y1="172.8" x2="214.4" y2="184.3" stroke-opacity="0.20" stroke-width="0.7"/><line x1="213.5" y1="154.6" x2="205.4" y2="157.2" stroke-opacity="0.48" stroke-width="0.8"/><line x1="214.2" y1="142.0" x2="199.4" y2="141.6" stroke-opacity="0.42" stroke-width="0.7"/><line x1="266.5" y1="173.1" x2="272.0" y2="190.1" stroke-opacity="0.47" stroke-width="0.7"/><line x1="226.8" y1="130.8" x2="217.6" y2="119.5" stroke-opacity="0.28" stroke-width="1.0"/><line x1="219.5" y1="151.4" x2="204.9" y2="156.8" stroke-opacity="0.25" stroke-width="0.7"/><line x1="255.9" y1="178.6" x2="258.1" y2="189.1" stroke-opacity="0.38" stroke-width="0.8"/><line x1="277.1" y1="159.6" x2="283.6" y2="160.7" stroke-opacity="0.31" stroke-width="0.9"/><line x1="284.8" y1="154.3" x2="291.5" y2="156.4" stroke-opacity="0.45" stroke-width="1.0"/><line x1="222.5" y1="140.4" x2="214.5" y2="136.9" stroke-opacity="0.39" stroke-width="1.0"/><line x1="268.5" y1="134.4" x2="273.9" y2="130.5" stroke-opacity="0.22" stroke-width="0.8"/><line x1="214.0" y1="149.8" x2="205.3" y2="145.9" stroke-opacity="0.25" stroke-width="0.6"/><line x1="264.5" y1="174.0" x2="267.3" y2="180.1" stroke-opacity="0.16" stroke-width="0.5"/><line x1="261.3" y1="121.9" x2="266.4" y2="114.0" stroke-opacity="0.43" stroke-width="0.8"/><line x1="221.7" y1="130.3" x2="214.2" y2="125.1" stroke-opacity="0.24" stroke-width="0.5"/><line x1="214.1" y1="149.1" x2="207.0" y2="151.2" stroke-opacity="0.16" stroke-width="0.5"/><line x1="267.4" y1="176.0" x2="275.6" y2="189.2" stroke-opacity="0.38" stroke-width="0.7"/><line x1="280.3" y1="165.3" x2="295.1" y2="167.6" stroke-opacity="0.26" stroke-width="0.8"/><line x1="239.8" y1="127.2" x2="236.1" y2="117.9" stroke-opacity="0.34" stroke-width="0.9"/><line x1="267.5" y1="173.2" x2="281.2" y2="183.2" stroke-opacity="0.21" stroke-width="0.9"/><line x1="224.3" y1="131.7" x2="214.1" y2="127.6" stroke-opacity="0.37" stroke-width="0.6"/><line x1="212.3" y1="163.1" x2="202.1" y2="168.3" stroke-opacity="0.27" stroke-width="0.6"/><line x1="221.5" y1="131.0" x2="215.3" y2="129.1" stroke-opacity="0.29" stroke-width="0.5"/><line x1="223.7" y1="136.8" x2="214.2" y2="130.3" stroke-opacity="0.49" stroke-width="0.6"/><line x1="245.6" y1="178.3" x2="247.7" y2="191.7" stroke-opacity="0.23" stroke-width="0.8"/><line x1="219.6" y1="147.0" x2="203.8" y2="149.4" stroke-opacity="0.25" stroke-width="0.7"/><line x1="212.9" y1="159.8" x2="206.0" y2="160.7" stroke-opacity="0.21" stroke-width="0.5"/><line x1="236.5" y1="122.2" x2="232.1" y2="117.4" stroke-opacity="0.22" stroke-width="0.7"/><line x1="285.7" y1="157.9" x2="290.5" y2="160.0" stroke-opacity="0.43" stroke-width="0.6"/><line x1="259.9" y1="128.2" x2="266.8" y2="114.8" stroke-opacity="0.45" stroke-width="0.9"/><line x1="256.6" y1="120.6" x2="255.1" y2="112.5" stroke-opacity="0.21" stroke-width="0.8"/><line x1="214.7" y1="148.3" x2="204.1" y2="151.8" stroke-opacity="0.47" stroke-width="0.7"/><line x1="219.2" y1="137.0" x2="204.8" y2="129.0" stroke-opacity="0.34" stroke-width="0.9"/><line x1="270.1" y1="176.7" x2="279.5" y2="185.9" stroke-opacity="0.20" stroke-width="0.7"/><line x1="240.4" y1="174.4" x2="232.9" y2="188.2" stroke-opacity="0.46" stroke-width="0.9"/><line x1="216.4" y1="169.4" x2="210.8" y2="175.3" stroke-opacity="0.31" stroke-width="0.8"/><line x1="271.3" y1="165.7" x2="288.1" y2="168.8" stroke-opacity="0.41" stroke-width="0.7"/><line x1="284.3" y1="143.6" x2="295.1" y2="141.3" stroke-opacity="0.39" stroke-width="0.6"/><line x1="286.6" y1="155.5" x2="297.8" y2="160.1" stroke-opacity="0.34" stroke-width="0.4"/><line x1="272.5" y1="167.1" x2="283.0" y2="181.2" stroke-opacity="0.25" stroke-width="0.7"/><line x1="280.9" y1="145.9" x2="289.9" y2="144.3" stroke-opacity="0.21" stroke-width="0.7"/><line x1="278.4" y1="163.9" x2="284.8" y2="164.2" stroke-opacity="0.41" stroke-width="0.7"/><line x1="265.4" y1="174.6" x2="276.0" y2="187.4" stroke-opacity="0.25" stroke-width="0.7"/><line x1="275.5" y1="133.5" x2="285.1" y2="127.7" stroke-opacity="0.27" stroke-width="1.0"/><line x1="243.7" y1="177.0" x2="239.2" y2="187.4" stroke-opacity="0.42" stroke-width="0.8"/><line x1="284.8" y1="151.9" x2="300.8" y2="146.6" stroke-opacity="0.22" stroke-width="0.5"/><line x1="268.3" y1="169.8" x2="274.6" y2="179.5" stroke-opacity="0.31" stroke-width="0.7"/><line x1="233.7" y1="122.5" x2="230.0" y2="105.3" stroke-opacity="0.32" stroke-width="0.4"/><line x1="239.7" y1="176.1" x2="231.6" y2="191.5" stroke-opacity="0.19" stroke-width="0.6"/><line x1="217.2" y1="165.4" x2="203.0" y2="176.0" stroke-opacity="0.39" stroke-width="0.6"/><line x1="275.7" y1="135.4" x2="288.6" y2="127.9" stroke-opacity="0.40" stroke-width="0.9"/><line x1="222.6" y1="169.2" x2="211.1" y2="175.4" stroke-opacity="0.36" stroke-width="0.6"/><line x1="214.4" y1="153.5" x2="204.7" y2="155.8" stroke-opacity="0.17" stroke-width="0.4"/><line x1="264.2" y1="171.9" x2="265.9" y2="181.6" stroke-opacity="0.29" stroke-width="0.9"/><line x1="233.6" y1="121.5" x2="233.9" y2="108.1" stroke-opacity="0.43" stroke-width="0.4"/><line x1="286.6" y1="152.0" x2="295.9" y2="153.5" stroke-opacity="0.48" stroke-width="1.0"/><line x1="216.7" y1="147.3" x2="204.7" y2="143.2" stroke-opacity="0.18" stroke-width="0.9"/><line x1="280.3" y1="152.1" x2="295.2" y2="157.9" stroke-opacity="0.45" stroke-width="0.9"/><line x1="216.6" y1="159.2" x2="205.8" y2="162.2" stroke-opacity="0.23" stroke-width="0.6"/><line x1="220.0" y1="154.6" x2="209.2" y2="160.8" stroke-opacity="0.35" stroke-width="0.4"/><line x1="261.2" y1="177.2" x2="260.7" y2="192.1" stroke-opacity="0.42" stroke-width="0.9"/><line x1="217.0" y1="162.8" x2="204.9" y2="162.6" stroke-opacity="0.45" stroke-width="0.4"/><line x1="234.8" y1="123.2" x2="235.0" y2="106.6" stroke-opacity="0.29" stroke-width="0.6"/><line x1="250.8" y1="176.9" x2="248.7" y2="193.2" stroke-opacity="0.44" stroke-width="0.6"/><line x1="250.4" y1="127.7" x2="249.5" y2="116.2" stroke-opacity="0.26" stroke-width="1.0"/><line x1="286.5" y1="152.2" x2="298.7" y2="158.3" stroke-opacity="0.29" stroke-width="0.9"/><line x1="215.4" y1="142.2" x2="202.3" y2="140.8" stroke-opacity="0.36" stroke-width="0.5"/><line x1="283.2" y1="157.7" x2="287.7" y2="160.6" stroke-opacity="0.23" stroke-width="0.9"/><line x1="235.3" y1="179.9" x2="230.5" y2="188.0" stroke-opacity="0.21" stroke-width="0.5"/><line x1="243.9" y1="184.2" x2="243.9" y2="200.9" stroke-opacity="0.49" stroke-width="1.0"/><line x1="269.8" y1="174.5" x2="275.5" y2="179.8" stroke-opacity="0.26" stroke-width="0.5"/><line x1="221.9" y1="138.2" x2="212.9" y2="136.1" stroke-opacity="0.24" stroke-width="0.9"/><line x1="239.1" y1="183.3" x2="240.3" y2="189.7" stroke-opacity="0.24" stroke-width="0.7"/><line x1="236.0" y1="177.0" x2="228.6" y2="189.7" stroke-opacity="0.23" stroke-width="0.9"/><line x1="226.0" y1="173.8" x2="218.3" y2="179.6" stroke-opacity="0.35" stroke-width="0.7"/><line x1="261.5" y1="173.1" x2="262.9" y2="181.4" stroke-opacity="0.47" stroke-width="0.6"/><line x1="275.2" y1="162.8" x2="292.2" y2="164.9" stroke-opacity="0.30" stroke-width="0.4"/><line x1="216.2" y1="152.2" x2="199.9" y2="145.1" stroke-opacity="0.33" stroke-width="0.9"/><line x1="232.7" y1="126.6" x2="221.0" y2="117.2" stroke-opacity="0.21" stroke-width="0.9"/><line x1="212.7" y1="148.2" x2="200.9" y2="143.0" stroke-opacity="0.24" stroke-width="0.5"/><line x1="238.8" y1="182.3" x2="233.5" y2="192.6" stroke-opacity="0.42" stroke-width="0.6"/><line x1="245.0" y1="120.6" x2="244.4" y2="109.0" stroke-opacity="0.31" stroke-width="0.7"/><line x1="256.4" y1="179.7" x2="263.7" y2="194.1" stroke-opacity="0.30" stroke-width="0.6"/><line x1="237.0" y1="182.5" x2="238.2" y2="196.9" stroke-opacity="0.33" stroke-width="0.6"/><line x1="228.6" y1="170.1" x2="221.4" y2="180.7" stroke-opacity="0.39" stroke-width="0.5"/><line x1="215.3" y1="148.4" x2="202.5" y2="152.1" stroke-opacity="0.43" stroke-width="0.7"/><line x1="247.7" y1="176.8" x2="254.2" y2="191.0" stroke-opacity="0.36" stroke-width="0.6"/><line x1="226.7" y1="178.8" x2="224.7" y2="185.3" stroke-opacity="0.15" stroke-width="0.6"/><line x1="273.4" y1="162.6" x2="282.3" y2="173.3" stroke-opacity="0.21" stroke-width="0.8"/><line x1="277.2" y1="145.7" x2="284.1" y2="144.1" stroke-opacity="0.17" stroke-width="0.7"/><line x1="267.0" y1="123.9" x2="270.5" y2="118.5" stroke-opacity="0.33" stroke-width="0.7"/><line x1="262.0" y1="178.4" x2="263.7" y2="185.1" stroke-opacity="0.18" stroke-width="0.4"/><line x1="267.5" y1="130.3" x2="273.9" y2="122.2" stroke-opacity="0.32" stroke-width="0.4"/><line x1="264.2" y1="121.7" x2="266.4" y2="113.0" stroke-opacity="0.25" stroke-width="0.8"/><line x1="214.3" y1="146.6" x2="201.4" y2="147.2" stroke-opacity="0.33" stroke-width="0.7"/><line x1="223.4" y1="130.4" x2="207.5" y2="122.5" stroke-opacity="0.33" stroke-width="0.8"/><line x1="265.0" y1="174.6" x2="269.1" y2="181.7" stroke-opacity="0.40" stroke-width="0.6"/><line x1="218.5" y1="157.5" x2="208.4" y2="155.4" stroke-opacity="0.46" stroke-width="0.6"/><line x1="231.8" y1="172.9" x2="218.3" y2="182.4" stroke-opacity="0.17" stroke-width="0.7"/><line x1="223.2" y1="166.8" x2="210.3" y2="171.2" stroke-opacity="0.28" stroke-width="1.0"/><line x1="224.2" y1="135.1" x2="211.2" y2="130.3" stroke-opacity="0.29" stroke-width="0.7"/><line x1="259.7" y1="174.2" x2="260.6" y2="184.1" stroke-opacity="0.22" stroke-width="0.7"/><line x1="224.8" y1="135.2" x2="219.7" y2="126.8" stroke-opacity="0.43" stroke-width="0.7"/><line x1="228.3" y1="134.5" x2="221.9" y2="129.5" stroke-opacity="0.17" stroke-width="0.7"/><line x1="221.3" y1="131.9" x2="211.6" y2="123.4" stroke-opacity="0.44" stroke-width="0.5"/><line x1="239.0" y1="176.3" x2="233.7" y2="183.4" stroke-opacity="0.31" stroke-width="0.9"/><line x1="215.8" y1="153.9" x2="204.4" y2="160.2" stroke-opacity="0.32" stroke-width="0.6"/><line x1="215.7" y1="154.4" x2="202.0" y2="154.0" stroke-opacity="0.15" stroke-width="0.7"/><line x1="220.3" y1="165.3" x2="213.1" y2="167.1" stroke-opacity="0.21" stroke-width="0.6"/><line x1="230.3" y1="180.0" x2="228.3" y2="191.0" stroke-opacity="0.22" stroke-width="0.6"/><line x1="260.3" y1="130.1" x2="265.2" y2="123.6" stroke-opacity="0.18" stroke-width="0.8"/><line x1="265.6" y1="127.8" x2="273.7" y2="116.3" stroke-opacity="0.46" stroke-width="1.0"/><line x1="217.9" y1="134.9" x2="208.8" y2="124.0" stroke-opacity="0.29" stroke-width="0.8"/><line x1="215.8" y1="167.7" x2="203.7" y2="177.6" stroke-opacity="0.34" stroke-width="1.0"/><line x1="245.0" y1="125.8" x2="239.8" y2="115.8" stroke-opacity="0.24" stroke-width="0.9"/><line x1="263.1" y1="178.0" x2="263.7" y2="192.9" stroke-opacity="0.30" stroke-width="0.4"/><line x1="217.0" y1="165.6" x2="202.3" y2="168.2" stroke-opacity="0.17" stroke-width="0.7"/><line x1="244.1" y1="125.4" x2="248.8" y2="110.6" stroke-opacity="0.27" stroke-width="0.8"/><line x1="281.9" y1="160.2" x2="296.8" y2="169.1" stroke-opacity="0.26" stroke-width="1.0"/><line x1="282.2" y1="152.1" x2="288.0" y2="151.7" stroke-opacity="0.24" stroke-width="0.5"/><line x1="274.5" y1="129.7" x2="280.2" y2="119.2" stroke-opacity="0.33" stroke-width="0.5"/><line x1="214.2" y1="142.5" x2="197.0" y2="141.2" stroke-opacity="0.24" stroke-width="0.5"/><line x1="282.5" y1="140.6" x2="291.3" y2="136.8" stroke-opacity="0.44" stroke-width="0.7"/><line x1="220.2" y1="137.2" x2="207.6" y2="135.9" stroke-opacity="0.21" stroke-width="0.9"/><line x1="278.3" y1="138.0" x2="289.9" y2="131.0" stroke-opacity="0.28" stroke-width="0.8"/><line x1="255.5" y1="120.0" x2="256.8" y2="111.8" stroke-opacity="0.30" stroke-width="0.8"/><line x1="274.8" y1="127.9" x2="285.2" y2="119.0" stroke-opacity="0.19" stroke-width="0.4"/><line x1="282.5" y1="155.5" x2="294.5" y2="152.0" stroke-opacity="0.46" stroke-width="0.8"/><line x1="236.4" y1="127.4" x2="233.4" y2="118.9" stroke-opacity="0.27" stroke-width="0.7"/><line x1="228.3" y1="127.4" x2="226.8" y2="118.3" stroke-opacity="0.24" stroke-width="0.7"/><line x1="226.9" y1="167.7" x2="219.0" y2="173.1" stroke-opacity="0.45" stroke-width="0.6"/><line x1="266.9" y1="176.4" x2="269.9" y2="181.2" stroke-opacity="0.19" stroke-width="0.8"/><line x1="250.2" y1="120.6" x2="253.2" y2="111.6" stroke-opacity="0.33" stroke-width="0.5"/><line x1="240.0" y1="126.7" x2="240.3" y2="109.3" stroke-opacity="0.15" stroke-width="0.8"/><line x1="220.6" y1="158.7" x2="209.7" y2="161.0" stroke-opacity="0.16" stroke-width="0.5"/><line x1="251.2" y1="125.5" x2="251.4" y2="109.2" stroke-opacity="0.38" stroke-width="0.6"/><line x1="283.2" y1="154.8" x2="291.9" y2="156.2" stroke-opacity="0.40" stroke-width="0.7"/><line x1="259.1" y1="174.9" x2="259.5" y2="190.7" stroke-opacity="0.27" stroke-width="0.8"/><line x1="276.9" y1="145.6" x2="288.5" y2="145.8" stroke-opacity="0.38" stroke-width="0.7"/><line x1="256.2" y1="125.2" x2="256.9" y2="117.3" stroke-opacity="0.26" stroke-width="0.7"/><line x1="275.1" y1="173.1" x2="283.0" y2="183.9" stroke-opacity="0.38" stroke-width="0.9"/><line x1="218.8" y1="160.1" x2="212.7" y2="165.0" stroke-opacity="0.49" stroke-width="0.8"/><line x1="225.0" y1="129.5" x2="218.2" y2="121.4" stroke-opacity="0.16" stroke-width="0.8"/><line x1="222.0" y1="162.3" x2="206.4" y2="169.7" stroke-opacity="0.16" stroke-width="0.5"/><line x1="233.6" y1="177.1" x2="231.9" y2="181.8" stroke-opacity="0.38" stroke-width="0.8"/><line x1="228.7" y1="177.2" x2="227.7" y2="184.0" stroke-opacity="0.16" stroke-width="0.5"/><line x1="261.9" y1="127.5" x2="272.2" y2="114.3" stroke-opacity="0.43" stroke-width="1.0"/><line x1="227.1" y1="127.2" x2="219.9" y2="113.5" stroke-opacity="0.30" stroke-width="0.8"/><line x1="279.8" y1="167.0" x2="283.3" y2="171.6" stroke-opacity="0.39" stroke-width="1.0"/><line x1="227.2" y1="130.4" x2="219.4" y2="121.9" stroke-opacity="0.18" stroke-width="0.9"/><line x1="262.8" y1="174.0" x2="265.8" y2="182.8" stroke-opacity="0.29" stroke-width="0.6"/><line x1="220.9" y1="138.0" x2="215.7" y2="132.7" stroke-opacity="0.31" stroke-width="0.8"/><line x1="286.2" y1="157.3" x2="293.4" y2="159.0" stroke-opacity="0.21" stroke-width="0.6"/><line x1="254.1" y1="123.4" x2="251.2" y2="105.9" stroke-opacity="0.46" stroke-width="0.9"/><line x1="230.9" y1="180.3" x2="225.7" y2="187.1" stroke-opacity="0.27" stroke-width="0.7"/><line x1="222.2" y1="128.6" x2="213.9" y2="124.7" stroke-opacity="0.25" stroke-width="0.8"/><line x1="230.4" y1="175.2" x2="224.2" y2="187.2" stroke-opacity="0.46" stroke-width="0.6"/><line x1="210.6" y1="154.8" x2="205.0" y2="156.0" stroke-opacity="0.38" stroke-width="0.8"/><line x1="217.4" y1="161.6" x2="200.6" y2="161.9" stroke-opacity="0.24" stroke-width="0.7"/><line x1="277.2" y1="152.9" x2="286.7" y2="152.3" stroke-opacity="0.40" stroke-width="0.5"/><line x1="212.4" y1="160.9" x2="206.8" y2="164.3" stroke-opacity="0.27" stroke-width="0.7"/><line x1="276.3" y1="142.3" x2="286.8" y2="139.3" stroke-opacity="0.44" stroke-width="1.0"/><line x1="272.2" y1="136.6" x2="276.9" y2="128.6" stroke-opacity="0.16" stroke-width="0.6"/><line x1="216.0" y1="163.0" x2="203.3" y2="174.7" stroke-opacity="0.49" stroke-width="0.8"/><line x1="271.6" y1="174.0" x2="277.5" y2="177.0" stroke-opacity="0.38" stroke-width="0.5"/><line x1="231.1" y1="127.8" x2="222.3" y2="117.4" stroke-opacity="0.36" stroke-width="0.5"/><line x1="271.7" y1="127.7" x2="278.9" y2="121.2" stroke-opacity="0.18" stroke-width="0.8"/><line x1="250.8" y1="184.1" x2="253.9" y2="189.8" stroke-opacity="0.46" stroke-width="0.8"/><line x1="226.8" y1="134.7" x2="220.6" y2="125.9" stroke-opacity="0.17" stroke-width="0.9"/><line x1="223.3" y1="137.9" x2="213.0" y2="132.3" stroke-opacity="0.43" stroke-width="0.7"/><line x1="266.6" y1="125.1" x2="269.7" y2="114.0" stroke-opacity="0.50" stroke-width="0.6"/><line x1="222.5" y1="128.6" x2="215.7" y2="125.6" stroke-opacity="0.43" stroke-width="0.8"/><line x1="264.5" y1="174.1" x2="270.7" y2="185.6" stroke-opacity="0.45" stroke-width="0.7"/><line x1="261.7" y1="180.1" x2="267.5" y2="188.7" stroke-opacity="0.20" stroke-width="0.6"/><line x1="269.1" y1="169.2" x2="279.8" y2="174.2" stroke-opacity="0.21" stroke-width="0.8"/><line x1="263.5" y1="179.3" x2="266.5" y2="183.6" stroke-opacity="0.20" stroke-width="0.7"/><line x1="211.9" y1="154.2" x2="201.5" y2="151.8" stroke-opacity="0.17" stroke-width="0.8"/><line x1="277.6" y1="161.3" x2="294.3" y2="163.5" stroke-opacity="0.17" stroke-width="1.0"/><line x1="282.6" y1="153.8" x2="289.4" y2="155.1" stroke-opacity="0.44" stroke-width="0.5"/><line x1="279.1" y1="137.0" x2="283.7" y2="132.3" stroke-opacity="0.29" stroke-width="0.9"/><line x1="268.0" y1="132.4" x2="280.0" y2="121.4" stroke-opacity="0.16" stroke-width="0.7"/><line x1="241.3" y1="180.0" x2="243.5" y2="194.9" stroke-opacity="0.18" stroke-width="0.4"/><line x1="212.9" y1="144.4" x2="205.1" y2="140.8" stroke-opacity="0.45" stroke-width="0.7"/><line x1="271.2" y1="165.1" x2="275.6" y2="169.8" stroke-opacity="0.44" stroke-width="0.4"/><line x1="223.0" y1="127.2" x2="220.4" y2="118.7" stroke-opacity="0.42" stroke-width="0.5"/><line x1="262.4" y1="180.6" x2="268.8" y2="186.6" stroke-opacity="0.16" stroke-width="0.8"/><line x1="235.4" y1="128.5" x2="226.3" y2="114.3" stroke-opacity="0.24" stroke-width="0.5"/><line x1="226.9" y1="126.4" x2="213.3" y2="117.7" stroke-opacity="0.37" stroke-width="0.6"/><line x1="278.2" y1="166.8" x2="285.4" y2="168.0" stroke-opacity="0.49" stroke-width="0.4"/><line x1="215.8" y1="154.1" x2="208.9" y2="151.7" stroke-opacity="0.17" stroke-width="0.4"/><line x1="233.0" y1="177.8" x2="225.8" y2="187.7" stroke-opacity="0.35" stroke-width="0.7"/><line x1="277.1" y1="148.6" x2="287.7" y2="145.6" stroke-opacity="0.49" stroke-width="0.7"/><line x1="211.3" y1="151.5" x2="193.7" y2="148.8" stroke-opacity="0.16" stroke-width="0.5"/><line x1="267.9" y1="169.0" x2="269.8" y2="174.1" stroke-opacity="0.29" stroke-width="0.8"/><line x1="245.9" y1="177.1" x2="251.2" y2="194.1" stroke-opacity="0.45" stroke-width="0.4"/><line x1="215.4" y1="155.3" x2="203.1" y2="155.8" stroke-opacity="0.19" stroke-width="0.9"/><line x1="256.9" y1="176.5" x2="259.9" y2="181.3" stroke-opacity="0.35" stroke-width="0.7"/><line x1="283.5" y1="142.5" x2="292.1" y2="138.3" stroke-opacity="0.33" stroke-width="0.6"/><line x1="225.8" y1="174.6" x2="218.8" y2="178.3" stroke-opacity="0.46" stroke-width="0.8"/><line x1="240.7" y1="119.1" x2="237.8" y2="108.3" stroke-opacity="0.38" stroke-width="0.9"/><line x1="219.6" y1="161.0" x2="202.0" y2="164.2" stroke-opacity="0.39" stroke-width="0.5"/><line x1="218.7" y1="167.5" x2="206.7" y2="178.6" stroke-opacity="0.18" stroke-width="0.8"/><line x1="269.6" y1="129.2" x2="276.9" y2="116.9" stroke-opacity="0.26" stroke-width="0.5"/><line x1="277.3" y1="170.3" x2="289.1" y2="180.5" stroke-opacity="0.34" stroke-width="0.7"/><line x1="256.9" y1="128.1" x2="256.8" y2="120.3" stroke-opacity="0.49" stroke-width="0.7"/><line x1="239.5" y1="125.9" x2="239.2" y2="110.4" stroke-opacity="0.29" stroke-width="1.0"/><line x1="284.2" y1="148.7" x2="293.2" y2="151.6" stroke-opacity="0.49" stroke-width="0.7"/><line x1="225.6" y1="174.2" x2="222.5" y2="182.7" stroke-opacity="0.26" stroke-width="0.6"/><line x1="214.2" y1="154.6" x2="197.2" y2="154.3" stroke-opacity="0.31" stroke-width="0.7"/><line x1="257.4" y1="123.0" x2="259.1" y2="112.7" stroke-opacity="0.41" stroke-width="0.8"/><line x1="231.1" y1="172.1" x2="229.8" y2="179.2" stroke-opacity="0.40" stroke-width="0.9"/><line x1="222.3" y1="141.2" x2="212.9" y2="139.3" stroke-opacity="0.18" stroke-width="0.8"/><line x1="270.8" y1="126.6" x2="277.4" y2="112.5" stroke-opacity="0.41" stroke-width="0.6"/><line x1="227.1" y1="176.8" x2="223.7" y2="180.8" stroke-opacity="0.26" stroke-width="0.7"/><line x1="252.1" y1="176.9" x2="255.0" y2="194.2" stroke-opacity="0.22" stroke-width="0.8"/><line x1="272.6" y1="132.3" x2="283.9" y2="126.8" stroke-opacity="0.46" stroke-width="0.7"/><line x1="220.7" y1="141.5" x2="216.0" y2="136.3" stroke-opacity="0.23" stroke-width="0.7"/><line x1="253.8" y1="175.8" x2="256.1" y2="183.9" stroke-opacity="0.24" stroke-width="1.0"/><line x1="237.3" y1="182.4" x2="229.1" y2="193.2" stroke-opacity="0.31" stroke-width="0.4"/><line x1="264.9" y1="171.4" x2="270.6" y2="174.8" stroke-opacity="0.24" stroke-width="0.7"/><line x1="232.7" y1="129.5" x2="229.5" y2="119.6" stroke-opacity="0.19" stroke-width="0.8"/><line x1="272.2" y1="163.7" x2="284.9" y2="171.9" stroke-opacity="0.36" stroke-width="0.6"/><line x1="267.8" y1="175.2" x2="269.4" y2="184.0" stroke-opacity="0.43" stroke-width="0.9"/><line x1="261.9" y1="176.0" x2="269.0" y2="183.0" stroke-opacity="0.32" stroke-width="0.8"/><line x1="239.3" y1="175.8" x2="239.0" y2="181.2" stroke-opacity="0.32" stroke-width="1.0"/><line x1="241.0" y1="126.1" x2="236.9" y2="118.7" stroke-opacity="0.46" stroke-width="0.4"/><line x1="279.0" y1="135.2" x2="286.8" y2="130.9" stroke-opacity="0.19" stroke-width="0.8"/><line x1="278.6" y1="171.5" x2="286.0" y2="178.8" stroke-opacity="0.49" stroke-width="0.9"/><line x1="263.2" y1="125.0" x2="267.7" y2="116.2" stroke-opacity="0.41" stroke-width="0.6"/><line x1="280.4" y1="140.8" x2="293.6" y2="129.9" stroke-opacity="0.32" stroke-width="0.7"/><line x1="238.0" y1="179.2" x2="236.1" y2="190.5" stroke-opacity="0.24" stroke-width="0.7"/><line x1="224.2" y1="168.0" x2="219.9" y2="171.8" stroke-opacity="0.39" stroke-width="0.5"/><line x1="271.6" y1="136.4" x2="274.8" y2="130.9" stroke-opacity="0.43" stroke-width="0.5"/><line x1="281.0" y1="162.9" x2="288.9" y2="164.9" stroke-opacity="0.35" stroke-width="0.6"/><line x1="272.4" y1="133.1" x2="283.4" y2="125.8" stroke-opacity="0.34" stroke-width="0.8"/><line x1="239.0" y1="175.6" x2="232.8" y2="184.6" stroke-opacity="0.32" stroke-width="0.7"/><line x1="277.5" y1="132.3" x2="293.1" y2="124.5" stroke-opacity="0.39" stroke-width="0.6"/><line x1="251.5" y1="183.1" x2="247.1" y2="195.9" stroke-opacity="0.23" stroke-width="1.0"/><line x1="257.6" y1="181.0" x2="257.3" y2="191.7" stroke-opacity="0.36" stroke-width="0.6"/><line x1="258.3" y1="127.5" x2="264.8" y2="114.5" stroke-opacity="0.41" stroke-width="0.9"/><line x1="272.3" y1="175.8" x2="278.5" y2="189.2" stroke-opacity="0.49" stroke-width="0.8"/><line x1="254.2" y1="123.7" x2="257.3" y2="106.7" stroke-opacity="0.34" stroke-width="0.4"/><line x1="223.1" y1="164.8" x2="218.7" y2="167.4" stroke-opacity="0.18" stroke-width="0.5"/><line x1="277.7" y1="146.0" x2="287.1" y2="146.0" stroke-opacity="0.16" stroke-width="0.9"/><line x1="219.5" y1="155.4" x2="213.6" y2="157.4" stroke-opacity="0.38" stroke-width="0.7"/><line x1="237.8" y1="174.3" x2="235.9" y2="188.6" stroke-opacity="0.31" stroke-width="0.7"/><line x1="213.4" y1="137.6" x2="202.6" y2="126.6" stroke-opacity="0.25" stroke-width="0.8"/><line x1="231.5" y1="124.1" x2="230.5" y2="113.7" stroke-opacity="0.32" stroke-width="0.9"/><line x1="212.6" y1="156.5" x2="205.4" y2="159.7" stroke-opacity="0.34" stroke-width="0.8"/><line x1="210.7" y1="150.4" x2="194.5" y2="150.8" stroke-opacity="0.18" stroke-width="0.6"/><line x1="268.0" y1="177.9" x2="271.4" y2="185.7" stroke-opacity="0.40" stroke-width="0.7"/><line x1="271.5" y1="133.0" x2="281.9" y2="129.2" stroke-opacity="0.22" stroke-width="0.8"/><line x1="278.1" y1="156.7" x2="287.6" y2="163.0" stroke-opacity="0.45" stroke-width="0.9"/><line x1="270.5" y1="173.5" x2="278.2" y2="177.6" stroke-opacity="0.41" stroke-width="0.9"/><line x1="216.1" y1="162.5" x2="207.9" y2="167.4" stroke-opacity="0.18" stroke-width="0.8"/><line x1="242.6" y1="125.4" x2="244.9" y2="116.9" stroke-opacity="0.23" stroke-width="0.7"/><line x1="282.3" y1="165.7" x2="295.5" y2="172.5" stroke-opacity="0.28" stroke-width="0.5"/><line x1="266.0" y1="177.1" x2="272.8" y2="185.8" stroke-opacity="0.34" stroke-width="0.5"/><line x1="264.3" y1="125.5" x2="266.7" y2="119.3" stroke-opacity="0.19" stroke-width="0.7"/><line x1="219.2" y1="159.6" x2="201.6" y2="162.1" stroke-opacity="0.28" stroke-width="0.8"/><line x1="229.7" y1="132.4" x2="223.1" y2="122.7" stroke-opacity="0.25" stroke-width="0.6"/><line x1="227.5" y1="127.4" x2="214.5" y2="117.0" stroke-opacity="0.28" stroke-width="0.9"/><line x1="272.8" y1="164.2" x2="278.3" y2="166.1" stroke-opacity="0.21" stroke-width="0.6"/><line x1="217.3" y1="153.1" x2="204.8" y2="151.7" stroke-opacity="0.26" stroke-width="0.5"/><line x1="280.6" y1="148.7" x2="286.1" y2="146.1" stroke-opacity="0.40" stroke-width="0.7"/><line x1="281.5" y1="139.7" x2="287.4" y2="138.7" stroke-opacity="0.49" stroke-width="1.0"/><line x1="268.6" y1="127.6" x2="281.8" y2="117.0" stroke-opacity="0.30" stroke-width="0.6"/><line x1="276.9" y1="153.6" x2="286.7" y2="150.7" stroke-opacity="0.20" stroke-width="0.7"/><line x1="246.4" y1="184.1" x2="245.8" y2="191.5" stroke-opacity="0.33" stroke-width="0.6"/><line x1="257.6" y1="120.0" x2="255.4" y2="104.3" stroke-opacity="0.27" stroke-width="0.7"/><line x1="278.4" y1="135.8" x2="287.6" y2="132.3" stroke-opacity="0.49" stroke-width="0.5"/><line x1="276.8" y1="147.3" x2="281.0" y2="144.5" stroke-opacity="0.45" stroke-width="0.6"/><line x1="271.7" y1="129.9" x2="276.9" y2="127.7" stroke-opacity="0.21" stroke-width="1.0"/><line x1="274.2" y1="133.2" x2="277.2" y2="127.9" stroke-opacity="0.23" stroke-width="0.5"/><line x1="247.8" y1="125.8" x2="244.0" y2="115.9" stroke-opacity="0.45" stroke-width="0.6"/><line x1="283.6" y1="156.3" x2="297.4" y2="158.5" stroke-opacity="0.42" stroke-width="0.6"/><line x1="261.2" y1="122.4" x2="267.5" y2="113.2" stroke-opacity="0.25" stroke-width="0.7"/><line x1="227.4" y1="134.6" x2="221.0" y2="123.5" stroke-opacity="0.49" stroke-width="1.0"/><line x1="218.5" y1="166.7" x2="212.2" y2="167.5" stroke-opacity="0.17" stroke-width="0.8"/><line x1="212.8" y1="161.0" x2="195.8" y2="159.6" stroke-opacity="0.49" stroke-width="0.9"/><line x1="277.0" y1="154.5" x2="287.9" y2="157.5" stroke-opacity="0.45" stroke-width="0.9"/><line x1="248.2" y1="123.4" x2="246.3" y2="116.0" stroke-opacity="0.41" stroke-width="0.6"/><line x1="279.8" y1="164.7" x2="290.1" y2="171.9" stroke-opacity="0.32" stroke-width="0.5"/><line x1="281.1" y1="146.6" x2="293.5" y2="146.2" stroke-opacity="0.15" stroke-width="0.5"/><line x1="227.0" y1="178.7" x2="222.4" y2="181.8" stroke-opacity="0.36" stroke-width="0.7"/><line x1="245.6" y1="119.7" x2="238.3" y2="106.4" stroke-opacity="0.45" stroke-width="0.6"/><line x1="266.2" y1="127.7" x2="269.1" y2="111.8" stroke-opacity="0.33" stroke-width="0.9"/><line x1="232.9" y1="180.2" x2="229.8" y2="186.4" stroke-opacity="0.16" stroke-width="0.8"/><line x1="244.0" y1="181.4" x2="243.7" y2="187.5" stroke-opacity="0.35" stroke-width="0.5"/><line x1="237.1" y1="180.1" x2="232.4" y2="191.4" stroke-opacity="0.17" stroke-width="0.9"/><line x1="213.5" y1="155.0" x2="208.3" y2="153.7" stroke-opacity="0.16" stroke-width="0.7"/><line x1="221.2" y1="164.7" x2="216.6" y2="169.0" stroke-opacity="0.43" stroke-width="0.5"/><line x1="216.1" y1="168.6" x2="207.5" y2="170.7" stroke-opacity="0.19" stroke-width="0.6"/><line x1="227.5" y1="168.5" x2="222.1" y2="173.0" stroke-opacity="0.29" stroke-width="0.4"/><line x1="247.9" y1="177.7" x2="247.4" y2="188.0" stroke-opacity="0.30" stroke-width="0.9"/><line x1="267.6" y1="126.2" x2="276.5" y2="119.9" stroke-opacity="0.25" stroke-width="0.7"/><line x1="275.6" y1="166.4" x2="285.3" y2="181.5" stroke-opacity="0.26" stroke-width="0.7"/><line x1="249.5" y1="179.6" x2="253.1" y2="194.3" stroke-opacity="0.50" stroke-width="1.0"/><line x1="247.6" y1="126.4" x2="249.9" y2="121.0" stroke-opacity="0.49" stroke-width="0.8"/><line x1="245.7" y1="177.5" x2="249.3" y2="193.2" stroke-opacity="0.33" stroke-width="0.5"/><line x1="262.0" y1="181.1" x2="266.7" y2="197.1" stroke-opacity="0.28" stroke-width="0.5"/><line x1="273.3" y1="164.2" x2="282.0" y2="165.4" stroke-opacity="0.25" stroke-width="0.5"/><line x1="230.3" y1="125.1" x2="217.5" y2="113.2" stroke-opacity="0.44" stroke-width="0.9"/><line x1="275.6" y1="132.8" x2="290.0" y2="127.2" stroke-opacity="0.17" stroke-width="0.9"/><line x1="271.1" y1="125.7" x2="278.7" y2="114.8" stroke-opacity="0.28" stroke-width="0.7"/><line x1="222.7" y1="168.9" x2="208.7" y2="176.3" stroke-opacity="0.30" stroke-width="0.8"/><line x1="282.9" y1="160.0" x2="294.1" y2="161.9" stroke-opacity="0.50" stroke-width="0.5"/><line x1="252.8" y1="184.1" x2="257.7" y2="198.0" stroke-opacity="0.40" stroke-width="0.9"/><line x1="224.3" y1="134.5" x2="217.9" y2="128.9" stroke-opacity="0.30" stroke-width="1.0"/><line x1="222.2" y1="172.7" x2="218.8" y2="181.3" stroke-opacity="0.17" stroke-width="1.0"/><line x1="217.2" y1="166.8" x2="210.4" y2="174.0" stroke-opacity="0.27" stroke-width="0.8"/><line x1="215.8" y1="145.5" x2="204.4" y2="143.7" stroke-opacity="0.45" stroke-width="0.5"/><line x1="238.9" y1="174.5" x2="236.4" y2="190.7" stroke-opacity="0.42" stroke-width="0.4"/><line x1="247.9" y1="126.7" x2="246.8" y2="117.4" stroke-opacity="0.34" stroke-width="0.9"/><line x1="280.0" y1="137.2" x2="293.4" y2="135.7" stroke-opacity="0.28" stroke-width="0.6"/><line x1="278.7" y1="163.0" x2="294.1" y2="163.5" stroke-opacity="0.33" stroke-width="0.8"/><line x1="218.8" y1="159.9" x2="201.7" y2="161.4" stroke-opacity="0.17" stroke-width="0.6"/><line x1="215.5" y1="153.0" x2="202.2" y2="155.9" stroke-opacity="0.24" stroke-width="0.5"/><line x1="216.1" y1="168.1" x2="207.9" y2="176.6" stroke-opacity="0.31" stroke-width="0.5"/><line x1="257.6" y1="179.2" x2="257.4" y2="195.7" stroke-opacity="0.48" stroke-width="0.9"/><line x1="242.2" y1="175.0" x2="233.4" y2="189.1" stroke-opacity="0.18" stroke-width="0.5"/></g><linearGradient id="stg" gradientUnits="userSpaceOnUse" x1="0" y1="86" x2="0" y2="216"><stop offset="0" stop-color="#82347c"/><stop offset="0.45" stop-color="#a04c9a"/><stop offset="1" stop-color="#ac56a6"/></linearGradient><path d="M219.0,151.0 C218.7,152.3 218.0,154.7 217.2,158.7 C216.4,162.7 215.3,169.9 214.3,175.3 C213.3,180.7 212.4,186.0 211.3,191.0 C210.2,196.0 209.1,200.0 207.5,205.5 C205.9,211.0 203.7,218.6 201.6,224.0 C199.5,229.4 197.3,233.5 195.0,238.0 C192.7,242.5 190.3,246.9 188.0,251.0 C185.7,255.1 183.2,257.5 181.3,262.5 C179.4,267.5 178.7,273.8 176.5,281.0 C174.3,288.2 170.5,298.2 168.2,306.0 C165.9,313.8 163.6,323.5 162.5,328.0 C161.4,332.5 161.7,332.2 161.5,333.0 L182.0,333.0 C182.1,332.2 181.5,332.5 182.8,328.0 C184.1,323.5 187.6,313.8 189.8,306.0 C192.0,298.2 194.5,288.2 196.2,281.0 C197.9,273.8 198.2,269.0 200.0,262.5 C201.8,256.0 204.1,248.6 207.0,242.0 C209.9,235.4 213.2,228.4 217.2,223.1 C221.2,217.8 226.4,214.7 230.9,210.4 C235.4,206.1 239.3,201.4 244.0,197.5 C248.7,193.6 254.7,190.4 259.2,187.0 C263.7,183.6 270.3,182.5 270.9,177.3 C271.5,172.1 264.3,159.5 263.0,156.0 Z" fill="url(#stg)"/><path d="M219.0,151.0 C218.7,152.3 218.0,154.7 217.2,158.7 C216.4,162.7 215.3,169.9 214.3,175.3 C213.3,180.7 212.4,186.0 211.3,191.0 C210.2,196.0 209.1,200.0 207.5,205.5 C205.9,211.0 203.7,218.6 201.6,224.0 C199.5,229.4 197.3,233.5 195.0,238.0 C192.7,242.5 190.3,246.9 188.0,251.0 C185.7,255.1 183.2,257.5 181.3,262.5 C179.4,267.5 178.7,273.8 176.5,281.0 C174.3,288.2 170.5,298.2 168.2,306.0 C165.9,313.8 163.6,323.5 162.5,328.0 C161.4,332.5 161.7,332.2 161.5,333.0 L182.0,333.0 C182.1,332.2 181.5,332.5 182.8,328.0 C184.1,323.5 187.6,313.8 189.8,306.0 C192.0,298.2 194.5,288.2 196.2,281.0 C197.9,273.8 198.2,269.0 200.0,262.5 C201.8,256.0 204.1,248.6 207.0,242.0 C209.9,235.4 213.2,228.4 217.2,223.1 C221.2,217.8 226.4,214.7 230.9,210.4 C235.4,206.1 239.3,201.4 244.0,197.5 C248.7,193.6 254.7,190.4 259.2,187.0 C263.7,183.6 270.3,182.5 270.9,177.3 C271.5,172.1 264.3,159.5 263.0,156.0 Z" fill="none" stroke="#481040" stroke-width="2.4" filter="url(#bl1)"/><path d="M83.0,92.0 C84.3,93.4 87.5,96.7 90.7,100.6 C93.9,104.5 98.5,110.1 102.4,115.3 C106.3,120.5 108.8,124.3 114.1,131.9 C119.4,139.5 129.0,152.0 134.5,161.0 C140.0,170.0 142.1,177.7 146.9,186.0 C151.7,194.3 158.1,202.8 163.5,211.0 C168.9,219.2 173.9,227.5 179.1,235.0 C184.3,242.5 189.5,248.3 194.7,256.0 C199.9,263.7 204.9,272.7 210.2,281.0 C215.5,289.3 220.5,298.2 226.6,306.0 C232.7,313.8 242.9,323.5 247.0,328.0 C251.1,332.5 250.3,332.2 251.0,333.0 L280.0,333.0 C279.5,332.2 281.2,332.5 276.8,328.0 C272.4,323.5 260.0,313.8 253.3,306.0 C246.6,298.2 242.0,289.3 236.6,281.0 C231.2,272.7 226.5,263.7 221.1,256.0 C215.7,248.3 210.0,242.5 204.0,235.0 C198.0,227.5 191.1,219.2 185.0,211.0 C178.9,202.8 172.3,194.3 167.5,186.0 C162.7,177.7 159.0,169.3 156.0,161.0 C153.0,152.7 150.8,144.4 149.3,136.0 C147.9,127.6 147.8,118.7 147.3,110.4 C146.8,102.1 147.1,95.1 146.4,86.0 C145.7,76.9 143.6,61.0 143.0,56.0 Z" fill="url(#stg)"/><path d="M83.0,92.0 C84.3,93.4 87.5,96.7 90.7,100.6 C93.9,104.5 98.5,110.1 102.4,115.3 C106.3,120.5 108.8,124.3 114.1,131.9 C119.4,139.5 129.0,152.0 134.5,161.0 C140.0,170.0 142.1,177.7 146.9,186.0 C151.7,194.3 158.1,202.8 163.5,211.0 C168.9,219.2 173.9,227.5 179.1,235.0 C184.3,242.5 189.5,248.3 194.7,256.0 C199.9,263.7 204.9,272.7 210.2,281.0 C215.5,289.3 220.5,298.2 226.6,306.0 C232.7,313.8 242.9,323.5 247.0,328.0 C251.1,332.5 250.3,332.2 251.0,333.0 L280.0,333.0 C279.5,332.2 281.2,332.5 276.8,328.0 C272.4,323.5 260.0,313.8 253.3,306.0 C246.6,298.2 242.0,289.3 236.6,281.0 C231.2,272.7 226.5,263.7 221.1,256.0 C215.7,248.3 210.0,242.5 204.0,235.0 C198.0,227.5 191.1,219.2 185.0,211.0 C178.9,202.8 172.3,194.3 167.5,186.0 C162.7,177.7 159.0,169.3 156.0,161.0 C153.0,152.7 150.8,144.4 149.3,136.0 C147.9,127.6 147.8,118.7 147.3,110.4 C146.8,102.1 147.1,95.1 146.4,86.0 C145.7,76.9 143.6,61.0 143.0,56.0 Z" fill="none" stroke="#481040" stroke-width="2.4" filter="url(#bl1)"/><clipPath id="cp1"><path d="M83.0,92.0 C84.3,93.4 87.5,96.7 90.7,100.6 C93.9,104.5 98.5,110.1 102.4,115.3 C106.3,120.5 108.8,124.3 114.1,131.9 C119.4,139.5 129.0,152.0 134.5,161.0 C140.0,170.0 142.1,177.7 146.9,186.0 C151.7,194.3 158.1,202.8 163.5,211.0 C168.9,219.2 173.9,227.5 179.1,235.0 C184.3,242.5 189.5,248.3 194.7,256.0 C199.9,263.7 204.9,272.7 210.2,281.0 C215.5,289.3 220.5,298.2 226.6,306.0 C232.7,313.8 242.9,323.5 247.0,328.0 C251.1,332.5 250.3,332.2 251.0,333.0 L280.0,333.0 C279.5,332.2 281.2,332.5 276.8,328.0 C272.4,323.5 260.0,313.8 253.3,306.0 C246.6,298.2 242.0,289.3 236.6,281.0 C231.2,272.7 226.5,263.7 221.1,256.0 C215.7,248.3 210.0,242.5 204.0,235.0 C198.0,227.5 191.1,219.2 185.0,211.0 C178.9,202.8 172.3,194.3 167.5,186.0 C162.7,177.7 159.0,169.3 156.0,161.0 C153.0,152.7 150.8,144.4 149.3,136.0 C147.9,127.6 147.8,118.7 147.3,110.4 C146.8,102.1 147.1,95.1 146.4,86.0 C145.7,76.9 143.6,61.0 143.0,56.0 Z"/></clipPath><clipPath id="cp2"><path d="M219.0,151.0 C218.7,152.3 218.0,154.7 217.2,158.7 C216.4,162.7 215.3,169.9 214.3,175.3 C213.3,180.7 212.4,186.0 211.3,191.0 C210.2,196.0 209.1,200.0 207.5,205.5 C205.9,211.0 203.7,218.6 201.6,224.0 C199.5,229.4 197.3,233.5 195.0,238.0 C192.7,242.5 190.3,246.9 188.0,251.0 C185.7,255.1 183.2,257.5 181.3,262.5 C179.4,267.5 178.7,273.8 176.5,281.0 C174.3,288.2 170.5,298.2 168.2,306.0 C165.9,313.8 163.6,323.5 162.5,328.0 C161.4,332.5 161.7,332.2 161.5,333.0 L182.0,333.0 C182.1,332.2 181.5,332.5 182.8,328.0 C184.1,323.5 187.6,313.8 189.8,306.0 C192.0,298.2 194.5,288.2 196.2,281.0 C197.9,273.8 198.2,269.0 200.0,262.5 C201.8,256.0 204.1,248.6 207.0,242.0 C209.9,235.4 213.2,228.4 217.2,223.1 C221.2,217.8 226.4,214.7 230.9,210.4 C235.4,206.1 239.3,201.4 244.0,197.5 C248.7,193.6 254.7,190.4 259.2,187.0 C263.7,183.6 270.3,182.5 270.9,177.3 C271.5,172.1 264.3,159.5 263.0,156.0 Z"/></clipPath><path d="M182.8,328.0 C184.0,324.3 187.6,313.8 189.8,306.0 C192.0,298.2 194.5,288.2 196.2,281.0 C197.9,273.8 198.2,269.0 200.0,262.5 C201.8,256.0 204.1,248.6 207.0,242.0 C209.9,235.4 213.2,228.4 217.2,223.1 C221.2,217.8 226.4,214.7 230.9,210.4 C235.4,206.1 241.8,199.7 244.0,197.5" fill="none" stroke="#3e0c38" stroke-width="8" stroke-opacity="0.55" clip-path="url(#cp2)" filter="url(#bl1)"/><path d="M276.8,328.0 C272.9,324.3 260.0,313.8 253.3,306.0 C246.6,298.2 242.0,289.3 236.6,281.0 C231.2,272.7 226.5,263.7 221.1,256.0 C215.7,248.3 210.0,242.5 204.0,235.0 C198.0,227.5 191.1,219.2 185.0,211.0 C178.9,202.8 172.3,194.3 167.5,186.0 C162.7,177.7 159.0,169.3 156.0,161.0 C153.0,152.7 150.8,144.4 149.3,136.0 C147.9,127.6 147.6,114.7 147.3,110.4" fill="none" stroke="#3e0c38" stroke-width="8" stroke-opacity="0.55" clip-path="url(#cp1)" filter="url(#bl1)"/><path d="M123.0,126.0 C126.0,131.0 135.7,146.5 141.0,156.0 C146.3,165.5 149.7,174.2 155.0,183.0 C160.3,191.8 167.2,200.5 173.0,209.0 C178.8,217.5 184.5,226.2 190.0,234.0 C195.5,241.8 200.7,248.3 206.0,256.0 C211.3,263.7 216.5,271.8 222.0,280.0 C227.5,288.2 232.5,297.0 239.0,305.0 C245.5,313.0 256.5,323.3 261.0,328.0 C265.5,332.7 265.2,332.2 266.0,333.0" fill="none" stroke="#e2aae0" stroke-width="4.5" stroke-opacity="0.6" filter="url(#bl1)"/><path d="M233.0,186.0 C231.0,189.0 224.7,198.0 221.0,204.0 C217.3,210.0 214.5,215.0 211.0,222.0 C207.5,229.0 203.5,238.7 200.0,246.0 C196.5,253.3 192.5,260.0 190.0,266.0 C187.5,272.0 186.8,275.3 185.0,282.0 C183.2,288.7 181.2,297.5 179.0,306.0 C176.8,314.5 173.2,328.5 172.0,333.0" fill="none" stroke="#e2aae0" stroke-width="4" stroke-opacity="0.55" filter="url(#bl1)"/><g stroke="#f4d8f4" stroke-linecap="round" filter="url(#bl05)"><line x1="228.5" y1="289.5" x2="230.3" y2="292.2" stroke-opacity="0.40" stroke-width="0.9"/><line x1="230.2" y1="293.8" x2="231.8" y2="296.2" stroke-opacity="0.60" stroke-width="1.0"/><line x1="184.9" y1="229.9" x2="187.9" y2="234.3" stroke-opacity="0.69" stroke-width="1.0"/><line x1="251.7" y1="321.9" x2="254.3" y2="324.6" stroke-opacity="0.73" stroke-width="1.2"/><line x1="149.3" y1="167.8" x2="150.9" y2="170.8" stroke-opacity="0.35" stroke-width="1.0"/><line x1="262.0" y1="327.8" x2="264.2" y2="330.1" stroke-opacity="0.54" stroke-width="0.8"/><line x1="156.2" y1="190.4" x2="158.0" y2="193.0" stroke-opacity="0.67" stroke-width="1.3"/><line x1="171.5" y1="207.9" x2="173.0" y2="210.0" stroke-opacity="0.36" stroke-width="1.2"/><line x1="224.8" y1="281.0" x2="226.4" y2="283.4" stroke-opacity="0.47" stroke-width="0.8"/><line x1="209.8" y1="258.2" x2="212.9" y2="262.9" stroke-opacity="0.74" stroke-width="1.3"/><line x1="246.1" y1="309.6" x2="249.7" y2="313.3" stroke-opacity="0.49" stroke-width="1.4"/><line x1="123.1" y1="131.3" x2="125.5" y2="135.2" stroke-opacity="0.65" stroke-width="1.3"/><line x1="228.1" y1="280.4" x2="230.1" y2="283.3" stroke-opacity="0.75" stroke-width="1.1"/><line x1="190.3" y1="229.4" x2="192.7" y2="232.9" stroke-opacity="0.44" stroke-width="1.0"/><line x1="213.4" y1="257.5" x2="215.3" y2="260.5" stroke-opacity="0.58" stroke-width="0.8"/><line x1="181.6" y1="216.9" x2="184.6" y2="221.4" stroke-opacity="0.50" stroke-width="1.5"/><line x1="259.5" y1="330.4" x2="263.5" y2="334.5" stroke-opacity="0.64" stroke-width="1.1"/><line x1="242.2" y1="312.0" x2="244.5" y2="314.4" stroke-opacity="0.64" stroke-width="0.9"/><line x1="207.8" y1="262.4" x2="210.5" y2="266.5" stroke-opacity="0.45" stroke-width="1.0"/><line x1="154.9" y1="179.0" x2="157.6" y2="184.0" stroke-opacity="0.38" stroke-width="1.0"/><line x1="219.2" y1="274.5" x2="222.4" y2="279.3" stroke-opacity="0.45" stroke-width="1.5"/><line x1="236.6" y1="305.5" x2="238.3" y2="308.0" stroke-opacity="0.50" stroke-width="1.3"/><line x1="245.2" y1="307.7" x2="247.4" y2="310.0" stroke-opacity="0.35" stroke-width="1.1"/><line x1="208.7" y1="252.8" x2="211.6" y2="256.7" stroke-opacity="0.42" stroke-width="1.3"/><line x1="232.4" y1="300.1" x2="234.3" y2="302.8" stroke-opacity="0.69" stroke-width="1.1"/><line x1="222.9" y1="279.5" x2="224.7" y2="282.2" stroke-opacity="0.56" stroke-width="1.6"/><line x1="179.9" y1="306.0" x2="178.6" y2="311.1" stroke-opacity="0.72" stroke-width="1.0"/><line x1="175.1" y1="326.3" x2="174.0" y2="330.5" stroke-opacity="0.60" stroke-width="1.3"/><line x1="177.8" y1="323.1" x2="176.5" y2="328.1" stroke-opacity="0.75" stroke-width="1.4"/><line x1="223.0" y1="194.4" x2="220.8" y2="197.7" stroke-opacity="0.50" stroke-width="1.2"/><line x1="184.4" y1="296.9" x2="183.2" y2="301.8" stroke-opacity="0.75" stroke-width="1.4"/><line x1="195.1" y1="263.3" x2="193.5" y2="266.6" stroke-opacity="0.70" stroke-width="1.5"/><line x1="172.1" y1="328.7" x2="171.1" y2="332.5" stroke-opacity="0.73" stroke-width="0.9"/><line x1="210.0" y1="227.6" x2="207.7" y2="232.5" stroke-opacity="0.63" stroke-width="0.9"/><line x1="194.0" y1="257.3" x2="191.5" y2="262.4" stroke-opacity="0.62" stroke-width="1.6"/><line x1="190.1" y1="270.3" x2="189.4" y2="272.7" stroke-opacity="0.48" stroke-width="1.2"/><line x1="209.2" y1="240.2" x2="207.2" y2="244.6" stroke-opacity="0.46" stroke-width="0.8"/><line x1="210.4" y1="233.7" x2="208.5" y2="237.9" stroke-opacity="0.37" stroke-width="0.8"/><line x1="205.8" y1="234.5" x2="204.3" y2="237.7" stroke-opacity="0.69" stroke-width="0.8"/><line x1="174.1" y1="316.8" x2="173.4" y2="319.6" stroke-opacity="0.42" stroke-width="1.0"/><line x1="207.3" y1="222.4" x2="205.2" y2="227.1" stroke-opacity="0.42" stroke-width="1.1"/><line x1="173.9" y1="320.1" x2="173.1" y2="322.9" stroke-opacity="0.40" stroke-width="0.9"/></g><g filter="url(#fray)"><ellipse cx="106" cy="70" rx="46" ry="43" fill="url(#hg)"/><ellipse cx="248" cy="151.5" rx="40" ry="34" fill="url(#hg)"/></g><ellipse cx="106" cy="70" rx="35" ry="32" fill="#fff" filter="url(#mott)" opacity="0.22"/><ellipse cx="248" cy="151.5" rx="29" ry="23" fill="#fff" filter="url(#mott)" opacity="0.22"/><path d="M89,101 Q103,114 113,130" stroke="#3a0a30" stroke-width="3.2" fill="none" filter="url(#bl1)" opacity="0.85"/><path d="M219,156 Q215,171 212,184" stroke="#3a0a30" stroke-width="3" fill="none" filter="url(#bl1)" opacity="0.7"/></symbol></defs></svg>
<div class="a" style="left:692px;top:63px;width:318px;height:105px;background:repeating-linear-gradient(180deg,#d3d5d9 0px,#d3d5d9 2px,#d0d2d7 2px,#d0d2d7 4px)"></div>
<svg class="a" style="left:0;top:0" width="1024" height="300"><polygon points="15.5,7.5 688.5,7.5 692.5,11.5 692.5,287.5 688.5,291.5 15.5,291.5 10.5,286.5 10.5,12.5" fill="#d6d6d6" stroke="#151515" stroke-width="1.3"/></svg>
<div class="a" style="left:17px;top:12px;width:650px;height:259px;background:#fff"></div><div class="a" style="left:17px;top:12px;width:650px;height:257.5px;overflow:hidden">
<div class="a" style="left:15px;top:0px;width:635px;height:24px;background:#6aeaee"></div>
<div class="cb" style="left:2px;top:6.80px"></div>
<div class="t" style="left:14.25px;top:3.20px;font-size:12.75px;line-height:12.75px;color:#b0fdfd;transform:scaleX(1.0294);transform-origin:0 0;">10/5/2023</div>
<div class="t" style="left:81.30px;top:3.20px;font-size:12.75px;line-height:12.75px;color:#b0fdfd;transform:scaleX(0.8850);transform-origin:0 0;word-spacing:1.6px;">ASPERGILLUS FUMIGATUS</div>
<div class="cb" style="left:2px;top:31.47px"></div>
<div class="t" style="left:14.25px;top:27.87px;font-size:12.75px;line-height:12.75px;color:#2b2b2b;transform:scaleX(1.0294);transform-origin:0 0;">10/5/2023</div>
<div class="t" style="left:81.30px;top:27.87px;font-size:12.75px;line-height:12.75px;color:#2b2b2b;transform:scaleX(0.8850);transform-origin:0 0;word-spacing:1.6px;">ASPERGILLUS NIGER</div>
<div class="cb" style="left:2px;top:56.14px"></div>
<div class="t" style="left:14.25px;top:52.54px;font-size:12.75px;line-height:12.75px;color:#2b2b2b;transform:scaleX(1.0294);transform-origin:0 0;">10/5/2023</div>
<div class="t" style="left:80.74px;top:52.54px;font-size:12.75px;line-height:12.75px;color:#2b2b2b;transform:scaleX(0.8850);transform-origin:0 0;word-spacing:1.6px;">CANDIDA GLABRATA</div>
<div class="cb" style="left:2px;top:80.81px"></div>
<div class="t" style="left:14.25px;top:77.21px;font-size:12.75px;line-height:12.75px;color:#2b2b2b;transform:scaleX(1.0294);transform-origin:0 0;">10/5/2023</div>
<div class="t" style="left:80.40px;top:77.21px;font-size:12.75px;line-height:12.75px;color:#2b2b2b;transform:scaleX(0.8850);transform-origin:0 0;word-spacing:1.6px;">ENTEROBIUS  VERMICULARIS</div>
<div class="cb" style="left:2px;top:105.48px"></div>
<div class="t" style="left:14.25px;top:101.88px;font-size:12.75px;line-height:12.75px;color:#2b2b2b;transform:scaleX(1.0294);transform-origin:0 0;">10/5/2023</div>
<div class="t" style="left:80.40px;top:101.88px;font-size:12.75px;line-height:12.75px;color:#2b2b2b;transform:scaleX(0.8850);transform-origin:0 0;word-spacing:1.6px;">HELIOBACTER PYLORI</div>
<div class="cb" style="left:2px;top:130.15px"></div>
<div class="t" style="left:14.25px;top:126.55px;font-size:12.75px;line-height:12.75px;color:#2b2b2b;transform:scaleX(1.0294);transform-origin:0 0;">10/5/2023</div>
<div class="t" style="left:80.40px;top:126.55px;font-size:12.75px;line-height:12.75px;color:#2b2b2b;transform:scaleX(0.8850);transform-origin:0 0;word-spacing:1.6px;">MUCOR RACEMOSUS</div>
<div class="cb" style="left:2px;top:154.82px"></div>
<div class="t" style="left:14.25px;top:151.22px;font-size:12.75px;line-height:12.75px;color:#2b2b2b;transform:scaleX(1.0294);transform-origin:0 0;">10/5/2023</div>
<div class="t" style="left:80.40px;top:151.22px;font-size:12.75px;line-height:12.75px;color:#2b2b2b;transform:scaleX(0.8850);transform-origin:0 0;word-spacing:1.6px;">MUCOSIS FUNGOIDES</div>
<div class="cb" style="left:2px;top:179.49px"></div>
<div class="t" style="left:14.25px;top:175.89px;font-size:12.75px;line-height:12.75px;color:#2b2b2b;transform:scaleX(1.0294);transform-origin:0 0;">10/5/2023</div>
<div class="t" style="left:80.74px;top:175.89px;font-size:12.75px;line-height:12.75px;color:#2b2b2b;transform:scaleX(0.8850);transform-origin:0 0;word-spacing:1.6px;">CANDIDA PARAPSILOSIS</div>
<div class="cb" style="left:2px;top:204.16px"></div>
<div class="t" style="left:14.25px;top:200.56px;font-size:12.75px;line-height:12.75px;color:#2b2b2b;transform:scaleX(1.0294);transform-origin:0 0;">10/5/2023</div>
<div class="t" style="left:80.74px;top:200.56px;font-size:12.75px;line-height:12.75px;color:#2b2b2b;transform:scaleX(0.8850);transform-origin:0 0;word-spacing:1.6px;">CANDIDA ROBUSTA</div>
<div class="cb" style="left:2px;top:228.83px"></div>
<div class="t" style="left:14.25px;top:225.23px;font-size:12.75px;line-height:12.75px;color:#2b2b2b;transform:scaleX(1.0294);transform-origin:0 0;">10/5/2023</div>
<div class="t" style="left:80.74px;top:225.23px;font-size:12.75px;line-height:12.75px;color:#2b2b2b;transform:scaleX(0.8850);transform-origin:0 0;word-spacing:1.6px;">CANDIDA SAHAROMYCES</div>
<div class="cb" style="left:2px;top:253.50px"></div>
<div class="t" style="left:14.25px;top:249.90px;font-size:12.75px;line-height:12.75px;color:#2b2b2b;transform:scaleX(1.0294);transform-origin:0 0;">10/5/2023</div>
<div class="t" style="left:80.74px;top:249.90px;font-size:12.75px;line-height:12.75px;color:#2b2b2b;transform:scaleX(0.8850);transform-origin:0 0;word-spacing:1.6px;">STAPHYLOCOCCUS  AUREUS</div>
</div>
<div class="a" style="left:667px;top:12px;width:17px;height:259px;background:#f0f0f0"></div>
<div class="a" style="left:668px;top:34px;width:15px;height:16px;background:#cdcdcd"></div>
<svg class="a" style="left:667px;top:12px" width="17" height="259"><polyline points="5,12 8.5,8.5 12,12" fill="none" stroke="#555" stroke-width="1.9"/><polyline points="5,247.5 8.5,251 12,247.5" fill="none" stroke="#555" stroke-width="1.9"/></svg>
<div class="a" style="left:17px;top:271px;width:667px;height:14px;background:#f0f0f0"></div>
<div class="a" style="left:33px;top:271px;width:407px;height:14px;background:#cdcdcd"></div>
<svg class="a" style="left:17px;top:271px" width="667" height="14"><polyline points="10,3.8 6,7.3 10,10.8" fill="none" stroke="#555" stroke-width="1.9"/><polyline points="639,3.8 643,7.3 639,10.8" fill="none" stroke="#555" stroke-width="1.9"/></svg>
<div class="btn" style="top:16px;"></div>
<div class="t" style="left:888.49px;top:20.86px;font-size:13px;line-height:13px;color:#1e1e1e;transform:scaleX(0.8708);transform-origin:0 0;">EXIT</div>
<div class="btn" style="top:90px;border:2px solid #2c6db3"></div>
<div class="t" style="left:867.70px;top:95.06px;font-size:13px;line-height:13px;color:#1e1e1e;transform:scaleX(0.9531);transform-origin:0 0;">Auto Search</div>
<div class="btn" style="top:119px;"></div>
<div class="t" style="left:889.03px;top:123.96px;font-size:13px;line-height:13px;color:#1e1e1e;transform:scaleX(1.0455);transform-origin:0 0;">Text</div>
<div class="btn" style="top:212px;"></div>
<div class="t" style="left:870.95px;top:217.06px;font-size:13px;line-height:13px;color:#1e1e1e;transform:scaleX(1.0068);transform-origin:0 0;">First graph</div>
<div class="btn" style="top:241px;background:#cce4f7;border-color:#2c5fa0"></div>
<div class="t" style="left:862.77px;top:247.16px;font-size:13px;line-height:13px;color:#1e1e1e;transform:scaleX(0.9681);transform-origin:0 0;">Second graph</div>
<div class="btn" style="top:270px;"></div>
<div class="t" style="left:874.36px;top:274.66px;font-size:13px;line-height:13px;color:#1e1e1e;transform:scaleX(0.9851);transform-origin:0 0;">Spectrum</div>
<div class="btn" style="left:18px;top:304px;width:187px;"></div>
<div class="btn" style="left:208px;top:304px;width:187px;"></div>
<div class="t" style="left:68.77px;top:310.16px;font-size:13px;line-height:13px;color:#1e1e1e;transform:scaleX(0.8763);transform-origin:0 0;">IMPROVEMENT</div>
<div class="t" style="left:265.99px;top:310.16px;font-size:13px;line-height:13px;color:#1e1e1e;transform:scaleX(0.8736);transform-origin:0 0;">WORSENING</div>
<svg class="a" style="left:0;top:330px" width="1024" height="360"><polygon points="15.5,8.5 987.5,8.5 992.5,13.5 992.5,344.5 987.5,349.5 15.5,349.5 10.5,344.5 10.5,13.5" fill="#d5d5d5" stroke="#151515" stroke-width="1.3"/></svg>
<div class="a" style="left:17px;top:344px;width:329px;height:329px;background:#fcfcfc;overflow:hidden"><svg class="a" style="left:0;top:0" width="329" height="329"><use href="#fung"/></svg><svg class="a" style="left:0;top:0" width="329" height="329"><polygon points="90.2,47.2 105.8,47.2 98.0,61.8" fill="#f01420" stroke="#3412aa" stroke-width="2.3" stroke-linejoin="round"/><polygon points="72.8,98.9 88.2,98.9 80.5,113.4" fill="#f01420" stroke="#3412aa" stroke-width="2.3" stroke-linejoin="round"/><polygon points="109.9,98.6 113.7,91.1 121.2,91.1 124.9,98.6 121.2,106.1 113.7,106.1" fill="#f8f012" stroke="#7a5020" stroke-width="1.4"/><polygon points="154.7,71.0 163.7,80.0 154.7,89.0 145.7,80.0" fill="#104848" stroke="#60d8e8" stroke-width="2.4"/><polygon points="154.7,73.6 161.1,80.0 154.7,86.4 148.3,80.0" fill="#8a0808"/><circle cx="131.3" cy="122.60000000000002" r="9.5" fill="#8a2a80" stroke="#6a1868" stroke-width="1.2"/><polygon points="126.0,131.0 140.0,131.0 133.0,119.0" fill="#f06418" stroke="#8a2450" stroke-width="1.3" stroke-linejoin="round"/><polygon points="129.4,157.8 143.4,157.8 136.4,145.8" fill="#f06418" stroke="#8a2450" stroke-width="1.3" stroke-linejoin="round"/><polygon points="161.6,192.0 170.6,201.0 161.6,210.0 152.6,201.0" fill="#104848" stroke="#60d8e8" stroke-width="2.4"/><polygon points="161.6,194.6 168.0,201.0 161.6,207.4 155.2,201.0" fill="#8a0808"/><polygon points="168.0,213.7 182.0,213.7 175.0,201.7" fill="#f06418" stroke="#8a2450" stroke-width="1.3" stroke-linejoin="round"/><polygon points="236.0,118.5 245.0,127.5 236.0,136.5 227.0,127.5" fill="#104848" stroke="#60d8e8" stroke-width="2.4"/><polygon points="236.0,121.1 242.4,127.5 236.0,133.9 229.6,127.5" fill="#8a0808"/><polygon points="278.5,150.6 287.5,159.6 278.5,168.6 269.5,159.6" fill="#104848" stroke="#60d8e8" stroke-width="2.4"/><polygon points="278.5,153.2 284.9,159.6 278.5,166.0 272.1,159.6" fill="#8a0808"/><polygon points="245.0,187.6 259.0,187.6 252.0,175.6" fill="#f06418" stroke="#8a2450" stroke-width="1.3" stroke-linejoin="round"/><polygon points="219.2,187.2 234.8,187.2 227.0,201.8" fill="#f01420" stroke="#3412aa" stroke-width="2.3" stroke-linejoin="round"/><polygon points="202.2,203.2 217.8,203.2 210.0,217.8" fill="#f01420" stroke="#3412aa" stroke-width="2.3" stroke-linejoin="round"/><polygon points="190.2,236.2 205.8,236.2 198.0,250.8" fill="#f01420" stroke="#3412aa" stroke-width="2.3" stroke-linejoin="round"/><polygon points="179.2,265.2 194.8,265.2 187.0,279.8" fill="#f01420" stroke="#3412aa" stroke-width="2.3" stroke-linejoin="round"/><polygon points="175.8,283.2 191.3,283.2 183.6,297.8" fill="#f01420" stroke="#3412aa" stroke-width="2.3" stroke-linejoin="round"/><polygon points="164.2,313.2 179.8,313.2 172.0,327.8" fill="#f01420" stroke="#3412aa" stroke-width="2.3" stroke-linejoin="round"/><polygon points="230.7,306.8 244.7,306.8 237.7,294.8" fill="#f06418" stroke="#8a2450" stroke-width="1.3" stroke-linejoin="round"/><polygon points="249.2,313.2 264.8,313.2 257.0,327.8" fill="#f01420" stroke="#3412aa" stroke-width="2.3" stroke-linejoin="round"/></svg></div>
<div class="a" style="left:355px;top:344px;width:329px;height:329px;background:#fcfcfc;overflow:hidden"><svg class="a" style="left:0;top:0" width="329" height="329"><use href="#fung"/></svg><svg class="a" style="left:0;top:0" width="329" height="329"><polygon points="91.0,58.0 105.0,58.0 98.0,46.0" fill="#f06418" stroke="#8a2450" stroke-width="1.3" stroke-linejoin="round"/><polygon points="146.8,74.2 162.2,74.2 154.5,88.8" fill="#f01420" stroke="#3412aa" stroke-width="2.3" stroke-linejoin="round"/><polygon points="73.2,98.1 88.8,98.1 81.0,112.6" fill="#f01420" stroke="#3412aa" stroke-width="2.3" stroke-linejoin="round"/><polygon points="111.0,103.8 125.0,103.8 118.0,91.8" fill="#f06418" stroke="#8a2450" stroke-width="1.3" stroke-linejoin="round"/><circle cx="132" cy="123" r="9.5" fill="#8a2a80" stroke="#6a1868" stroke-width="1.2"/><polygon points="124.5,125.0 128.2,117.5 135.8,117.5 139.5,125.0 135.8,132.5 128.2,132.5" fill="#f8f012" stroke="#7a5020" stroke-width="1.4"/><polygon points="128.5,153.0 132.2,145.5 139.8,145.5 143.5,153.0 139.8,160.5 132.2,160.5" fill="#f8f012" stroke="#7a5020" stroke-width="1.4"/><polygon points="229.2,121.9 244.8,121.9 237.0,136.4" fill="#f01420" stroke="#3412aa" stroke-width="2.3" stroke-linejoin="round"/><polygon points="271.2,154.2 286.8,154.2 279.0,168.8" fill="#f01420" stroke="#3412aa" stroke-width="2.3" stroke-linejoin="round"/><polygon points="244.2,176.2 259.8,176.2 252.0,190.8" fill="#f01420" stroke="#3412aa" stroke-width="2.3" stroke-linejoin="round"/><polygon points="219.2,186.2 234.8,186.2 227.0,200.8" fill="#f01420" stroke="#3412aa" stroke-width="2.3" stroke-linejoin="round"/><polygon points="154.9,196.0 170.4,196.0 162.6,210.5" fill="#f01420" stroke="#3412aa" stroke-width="2.3" stroke-linejoin="round"/><polygon points="168.0,214.0 182.0,214.0 175.0,202.0" fill="#f06418" stroke="#8a2450" stroke-width="1.3" stroke-linejoin="round"/><polygon points="203.7,214.7 217.7,214.7 210.7,202.7" fill="#f06418" stroke="#8a2450" stroke-width="1.3" stroke-linejoin="round"/><polygon points="190.9,241.0 194.6,233.5 202.1,233.5 205.9,241.0 202.1,248.5 194.6,248.5" fill="#f8f012" stroke="#7a5020" stroke-width="1.4"/><polygon points="181.0,276.0 195.0,276.0 188.0,264.0" fill="#f06418" stroke="#8a2450" stroke-width="1.3" stroke-linejoin="round"/><polygon points="176.7,294.0 190.7,294.0 183.7,282.0" fill="#f06418" stroke="#8a2450" stroke-width="1.3" stroke-linejoin="round"/><polygon points="231.0,307.0 245.0,307.0 238.0,295.0" fill="#f06418" stroke="#8a2450" stroke-width="1.3" stroke-linejoin="round"/><polygon points="166.0,323.7 180.0,323.7 173.0,311.7" fill="#f06418" stroke="#8a2450" stroke-width="1.3" stroke-linejoin="round"/><polygon points="250.0,323.7 264.0,323.7 257.0,311.7" fill="#f06418" stroke="#8a2450" stroke-width="1.3" stroke-linejoin="round"/></svg></div>
<div class="t" style="left:327.28px;top:350.11px;font-size:16.5px;line-height:16.5px;color:#111;">1</div>
<div class="t" style="left:662.67px;top:350.91px;font-size:16.5px;line-height:16.5px;color:#111;">2</div>
<div class="t" style="left:20.24px;top:655.64px;font-size:12.5px;line-height:12.5px;color:#222;transform:scaleX(1.0556);transform-origin:0 0;">10/5/2023</div>
<div class="t" style="left:359.15px;top:656.24px;font-size:12.5px;line-height:12.5px;color:#222;transform:scaleX(1.0544);transform-origin:0 0;">1/30/2024</div>
<div class="a" style="left:694px;top:342px;width:293px;height:292px;background:#d6d6f0"></div>
<svg class="a" style="left:696px;top:344px" width="289" height="288" viewBox="696 344 289 288"><rect x="696" y="344" width="289" height="288" fill="#000"/><path d="M696.5,344 V632 M696,344.5 H985" stroke="#000068" stroke-width="1"/><line x1="728" y1="344" x2="728" y2="632" stroke="#4c7c44" stroke-width="1.2"/><line x1="732.5" y1="344" x2="732.5" y2="632" stroke="#4c7c44" stroke-width="1.2"/><line x1="768.5" y1="344" x2="768.5" y2="632" stroke="#4c7c44" stroke-width="1.2"/><line x1="805" y1="344" x2="805" y2="632" stroke="#4c7c44" stroke-width="1.2"/><line x1="840.5" y1="344" x2="840.5" y2="632" stroke="#4c7c44" stroke-width="1.2"/><line x1="877" y1="344" x2="877" y2="632" stroke="#4c7c44" stroke-width="1.2"/><line x1="913.5" y1="344" x2="913.5" y2="632" stroke="#4c7c44" stroke-width="1.2"/><line x1="949.5" y1="344" x2="949.5" y2="632" stroke="#4c7c44" stroke-width="1.2"/><line x1="696" y1="366.5" x2="985" y2="366.5" stroke="#4c7c44" stroke-width="1.2"/><line x1="696" y1="411.3" x2="985" y2="411.3" stroke="#4c7c44" stroke-width="1.2"/><line x1="696" y1="456" x2="985" y2="456" stroke="#4c7c44" stroke-width="1.2"/><line x1="696" y1="500.5" x2="985" y2="500.5" stroke="#4c7c44" stroke-width="1.2"/><line x1="696" y1="544.5" x2="985" y2="544.5" stroke="#4c7c44" stroke-width="1.2"/><line x1="696" y1="589.5" x2="985" y2="589.5" stroke="#4c7c44" stroke-width="1.2"/><line x1="696" y1="475" x2="985" y2="475" stroke="#14148a" stroke-width="2"/><line x1="696" y1="487.5" x2="985" y2="487.5" stroke="#f0f0c8" stroke-width="1.3"/><line x1="696" y1="499.5" x2="985" y2="499.5" stroke="#8e3e18" stroke-width="1.6"/><polyline points="696,486.5 723.7,474.8 732,473.5 747,476.7 767.6,481.4 778,479 795.5,475.5 801,473.6 823,473.6 842.8,475.3 853.7,478.4 861,482 877,487 900.6,493.3 917.8,498 928.7,501.9 944.4,505.8 956.9,505.8 972.5,504.2 985,502.6" fill="none" stroke="#f4f0c0" stroke-width="1.3"/><polyline points="696,501.6 731,497.5 757.4,486.5 783.7,486.5 792.5,488.7 817.4,488.7 827.7,486 850.6,484 877,483 910,503.4 916,506.5 950.6,519 985,527.7" fill="none" stroke="#eca048" stroke-width="2.7"/><polyline points="696,484 732.5,474.5 772,474.5 792.5,481 877,481 908.5,500.3 963,500.3 985,505" fill="none" stroke="#8e2ed4" stroke-width="3"/></svg>
<div class="a" style="left:695px;top:638px;width:31px;height:33px;background:#a9b3c6"></div>
<svg class="a" style="left:695px;top:638px" width="31" height="33"><circle cx="15" cy="16.5" r="13.2" fill="#0a0ae0" stroke="#fff" stroke-width="2"/><rect x="13.3" y="11.2" width="3.6" height="12.5" fill="#fff"/><rect x="13.3" y="6.8" width="3.6" height="3" fill="#fff"/></svg>
<div class="t" style="left:730.87px;top:639.76px;font-size:13px;line-height:13px;color:#3c3ca8;transform:scaleX(0.9905);transform-origin:0 0;">Wide lines represent the top organ's graphs</div>
<div class="t" style="left:16.37px;top:682.63px;font-size:16.4px;line-height:16.4px;color:#333;transform:scaleX(1.0114);transform-origin:0 0;">Strengthening compensatory reactions 41%</div>
<svg class="a" style="left:0;top:710px" width="1024" height="40"><defs><linearGradient id="bb" x1="0" y1="0" x2="0" y2="1"><stop offset="0" stop-color="#cfdbe9"/><stop offset="0.15" stop-color="#bfd2e7"/><stop offset="1" stop-color="#bcd0e6"/></linearGradient></defs><polygon points="15.5,5.5 987.5,5.5 992.5,10.5 992.5,28 987.5,33 15.5,33 10.5,28 10.5,10.5" fill="url(#bb)" stroke="#36404c" stroke-width="1.3"/></svg>
<div class="t" style="left:15.92px;top:722.93px;font-size:17px;line-height:17px;color:#1a1a1a;transform:scaleX(1.0172);transform-origin:0 0;">10/5/2023</div>
<div class="t" style="left:99.40px;top:722.93px;font-size:17px;line-height:17px;color:#1a1a1a;transform:scaleX(0.8491);transform-origin:0 0;">ASPERGILLUS</div>
<div class="t" style="left:203.54px;top:722.93px;font-size:17px;line-height:17px;color:#1a1a1a;transform:scaleX(0.9242);transform-origin:0 0;">FUMIGATUS</div>
</body></html>
